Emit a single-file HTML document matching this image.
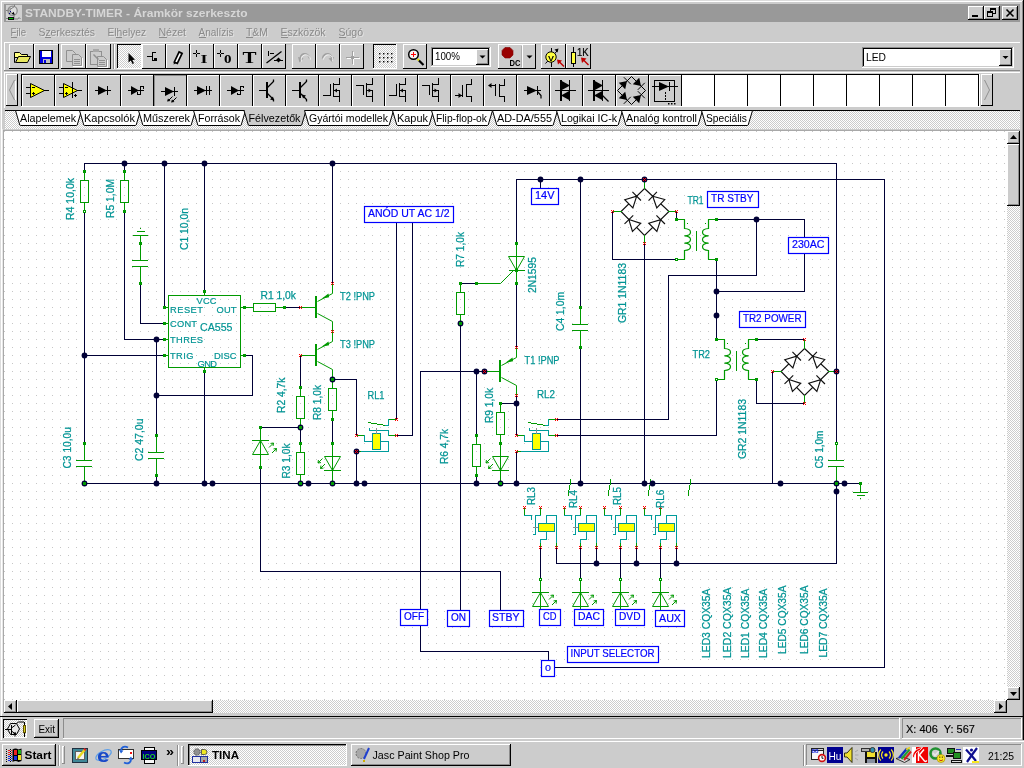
<!DOCTYPE html>
<html lang="hu">
<head>
<meta charset="utf-8">
<title>STANDBY-TIMER - Áramkör szerkeszto</title>
<style>
html,body{margin:0;padding:0;background:#cccccc;overflow:hidden}
body{width:1024px;height:768px;font-family:"Liberation Sans",sans-serif}
svg{display:block;position:absolute;left:0;top:0;will-change:transform}
svg text{font-family:"Liberation Sans",sans-serif;white-space:pre}
</style>
</head>
<body>
<svg width="1024" height="768" viewBox="0 0 1024 768">
<defs>
<pattern id="dith" width="2" height="2" patternUnits="userSpaceOnUse"><rect width="2" height="2" fill="#ffffff"/><rect width="1" height="1" fill="#cccccc"/><rect x="1" y="1" width="1" height="1" fill="#cccccc"/></pattern>
<pattern id="grid" x="4" y="3" width="8" height="8" patternUnits="userSpaceOnUse"><rect x="0" y="0" width="1" height="1" fill="#c6c6c6"/></pattern>
</defs>
<g id="window-frame">
<rect x="0" y="0" width="1024" height="768" fill="#cccccc"/>
<rect x="0" y="0" width="1024" height="1" fill="#dcdcdc"/>
<rect x="0" y="0" width="1" height="741" fill="#dcdcdc"/>
<rect x="1" y="1" width="1022" height="1" fill="#ffffff"/>
<rect x="1" y="1" width="1" height="740" fill="#ffffff"/>
<rect x="1023" y="0" width="1" height="741" fill="#000000"/>
<rect x="1022" y="1" width="1" height="740" fill="#8c8c8c"/>
</g>
<g id="titlebar">
<rect x="4" y="4" width="1016" height="18" fill="#999999"/>
<rect x="6" y="5" width="16" height="16" fill="#d0d0d0"/>
<circle cx="12.6" cy="10.8" r="4.6" fill="#dcdcdc" stroke="#8c8c8c" stroke-width="1.3"/>
<path d="M6 10.5h3.5M10 7.5v6.5M10 9.5l4.5 -3v-2M10 12l4 2.5v4.5h4l1 -1.5l1.5 1.5" stroke="#808080" fill="none"/>
<path d="M8.8 8a4.6 4.6 0 0 0 0 5.6z" fill="#909090"/>
<path d="M14.8 14.8l-3.2 -.8l2 -2.2z" fill="#000"/>
<rect x="10" y="11" width="1" height="1" fill="#000080"/>
<rect x="9" y="13" width="1" height="1" fill="#000080"/>
<rect x="8.5" y="17.5" width="5" height="2" fill="#00c000" stroke="#101010" stroke-width="1"/>
<rect x="6" y="18" width="2" height="1" fill="#808080"/>
<text x="25" y="17" font-size="11.5" fill="#d6d6d6" font-weight="bold" textLength="222.5" lengthAdjust="spacingAndGlyphs">STANDBY-TIMER - Áramkör szerkeszto</text>
<rect x="968" y="6" width="16" height="14" fill="#cccccc"/>
<rect x="968" y="6" width="16" height="1" fill="#ffffff"/>
<rect x="968" y="6" width="1" height="14" fill="#ffffff"/>
<rect x="968" y="19" width="16" height="1" fill="#000000"/>
<rect x="983" y="6" width="1" height="14" fill="#000000"/>
<rect x="969" y="18" width="14" height="1" fill="#8c8c8c"/>
<rect x="982" y="7" width="1" height="12" fill="#8c8c8c"/>
<rect x="972" y="15" width="6" height="2" fill="#000000"/>
<rect x="984" y="6" width="16" height="14" fill="#cccccc"/>
<rect x="984" y="6" width="16" height="1" fill="#ffffff"/>
<rect x="984" y="6" width="1" height="14" fill="#ffffff"/>
<rect x="984" y="19" width="16" height="1" fill="#000000"/>
<rect x="999" y="6" width="1" height="14" fill="#000000"/>
<rect x="985" y="18" width="14" height="1" fill="#8c8c8c"/>
<rect x="998" y="7" width="1" height="12" fill="#8c8c8c"/>
<rect x="990.5" y="8.5" width="5" height="5" fill="none" stroke="#000000" stroke-width="1"/>
<rect x="990" y="8" width="6" height="2" fill="#000000"/>
<rect x="987.5" y="11.5" width="5" height="5" fill="#cccccc" stroke="#000000" stroke-width="1"/>
<rect x="987" y="11" width="6" height="2" fill="#000000"/>
<rect x="1002" y="6" width="16" height="14" fill="#cccccc"/>
<rect x="1002" y="6" width="16" height="1" fill="#ffffff"/>
<rect x="1002" y="6" width="1" height="14" fill="#ffffff"/>
<rect x="1002" y="19" width="16" height="1" fill="#000000"/>
<rect x="1017" y="6" width="1" height="14" fill="#000000"/>
<rect x="1003" y="18" width="14" height="1" fill="#8c8c8c"/>
<rect x="1016" y="7" width="1" height="12" fill="#8c8c8c"/>
<path d="M1006.5 9.5l7 7m0 -7l-7 7" stroke="#000" stroke-width="1.6" fill="none"/>
</g>
<g id="menubar">
<text x="11.5" y="36.5" font-size="11.5" fill="#e4e4e4" textLength="15.5" lengthAdjust="spacingAndGlyphs">File</text>
<text x="10.5" y="35.5" font-size="11.5" fill="#8a8a8a" textLength="15.5" lengthAdjust="spacingAndGlyphs">File</text>
<rect x="11" y="37" width="6" height="1" fill="#8a8a8a"/>
<text x="39.5" y="36.5" font-size="11.5" fill="#e4e4e4" textLength="56.5" lengthAdjust="spacingAndGlyphs">Szerkesztés</text>
<text x="38.5" y="35.5" font-size="11.5" fill="#8a8a8a" textLength="56.5" lengthAdjust="spacingAndGlyphs">Szerkesztés</text>
<rect x="45" y="37" width="6" height="1" fill="#8a8a8a"/>
<text x="108.5" y="36.5" font-size="11.5" fill="#e4e4e4" textLength="38.5" lengthAdjust="spacingAndGlyphs">Elhelyez</text>
<text x="107.5" y="35.5" font-size="11.5" fill="#8a8a8a" textLength="38.5" lengthAdjust="spacingAndGlyphs">Elhelyez</text>
<rect x="116" y="37" width="6" height="1" fill="#8a8a8a"/>
<text x="159.5" y="36.5" font-size="11.5" fill="#e4e4e4" textLength="27.5" lengthAdjust="spacingAndGlyphs">Nézet</text>
<text x="158.5" y="35.5" font-size="11.5" fill="#8a8a8a" textLength="27.5" lengthAdjust="spacingAndGlyphs">Nézet</text>
<rect x="159" y="37" width="8" height="1" fill="#8a8a8a"/>
<text x="199.5" y="36.5" font-size="11.5" fill="#e4e4e4" textLength="35" lengthAdjust="spacingAndGlyphs">Analízis</text>
<text x="198.5" y="35.5" font-size="11.5" fill="#8a8a8a" textLength="35" lengthAdjust="spacingAndGlyphs">Analízis</text>
<rect x="199" y="37" width="7" height="1" fill="#8a8a8a"/>
<text x="247" y="36.5" font-size="11.5" fill="#e4e4e4" textLength="22" lengthAdjust="spacingAndGlyphs">T&amp;M</text>
<text x="246" y="35.5" font-size="11.5" fill="#8a8a8a" textLength="22" lengthAdjust="spacingAndGlyphs">T&amp;M</text>
<rect x="246" y="37" width="7" height="1" fill="#8a8a8a"/>
<text x="281.5" y="36.5" font-size="11.5" fill="#e4e4e4" textLength="45" lengthAdjust="spacingAndGlyphs">Eszközök</text>
<text x="280.5" y="35.5" font-size="11.5" fill="#8a8a8a" textLength="45" lengthAdjust="spacingAndGlyphs">Eszközök</text>
<rect x="281" y="37" width="7" height="1" fill="#8a8a8a"/>
<text x="339.5" y="36.5" font-size="11.5" fill="#e4e4e4" textLength="24.5" lengthAdjust="spacingAndGlyphs">Súgó</text>
<text x="338.5" y="35.5" font-size="11.5" fill="#8a8a8a" textLength="24.5" lengthAdjust="spacingAndGlyphs">Súgó</text>
<rect x="339" y="37" width="7" height="1" fill="#8a8a8a"/>
</g>
<g id="toolbar">
<rect x="4" y="42" width="1016" height="1" fill="#ffffff"/>
<rect x="4" y="42" width="1" height="29" fill="#ffffff"/>
<rect x="4" y="70" width="1016" height="1" fill="#8c8c8c"/>
<rect x="9" y="44" width="25" height="25" fill="#cccccc"/>
<rect x="9" y="44" width="25" height="1" fill="#ffffff"/>
<rect x="9" y="44" width="1" height="25" fill="#ffffff"/>
<rect x="9" y="68" width="25" height="1" fill="#000000"/>
<rect x="33" y="44" width="1" height="25" fill="#000000"/>
<rect x="34" y="44" width="25" height="25" fill="#cccccc"/>
<rect x="34" y="44" width="25" height="1" fill="#ffffff"/>
<rect x="34" y="44" width="1" height="25" fill="#ffffff"/>
<rect x="34" y="68" width="25" height="1" fill="#000000"/>
<rect x="58" y="44" width="1" height="25" fill="#000000"/>
<rect x="61" y="44" width="25" height="25" fill="#cccccc"/>
<rect x="61" y="44" width="25" height="1" fill="#ffffff"/>
<rect x="61" y="44" width="1" height="25" fill="#ffffff"/>
<rect x="61" y="68" width="25" height="1" fill="#000000"/>
<rect x="85" y="44" width="1" height="25" fill="#000000"/>
<rect x="86" y="44" width="25" height="25" fill="#cccccc"/>
<rect x="86" y="44" width="25" height="1" fill="#ffffff"/>
<rect x="86" y="44" width="1" height="25" fill="#ffffff"/>
<rect x="86" y="68" width="25" height="1" fill="#000000"/>
<rect x="110" y="44" width="1" height="25" fill="#000000"/>
<rect x="117" y="44" width="25" height="25" fill="url(#dith)"/>
<rect x="117" y="44" width="25" height="1" fill="#000000"/>
<rect x="117" y="44" width="1" height="25" fill="#000000"/>
<rect x="117" y="68" width="25" height="1" fill="#ffffff"/>
<rect x="141" y="44" width="1" height="25" fill="#ffffff"/>
<rect x="142" y="44" width="24" height="25" fill="#cccccc"/>
<rect x="142" y="44" width="24" height="1" fill="#ffffff"/>
<rect x="142" y="44" width="1" height="25" fill="#ffffff"/>
<rect x="142" y="68" width="24" height="1" fill="#000000"/>
<rect x="165" y="44" width="1" height="25" fill="#000000"/>
<rect x="166" y="44" width="24" height="25" fill="#cccccc"/>
<rect x="166" y="44" width="24" height="1" fill="#ffffff"/>
<rect x="166" y="44" width="1" height="25" fill="#ffffff"/>
<rect x="166" y="68" width="24" height="1" fill="#000000"/>
<rect x="189" y="44" width="1" height="25" fill="#000000"/>
<rect x="190" y="44" width="24" height="25" fill="#cccccc"/>
<rect x="190" y="44" width="24" height="1" fill="#ffffff"/>
<rect x="190" y="44" width="1" height="25" fill="#ffffff"/>
<rect x="190" y="68" width="24" height="1" fill="#000000"/>
<rect x="213" y="44" width="1" height="25" fill="#000000"/>
<rect x="214" y="44" width="24" height="25" fill="#cccccc"/>
<rect x="214" y="44" width="24" height="1" fill="#ffffff"/>
<rect x="214" y="44" width="1" height="25" fill="#ffffff"/>
<rect x="214" y="68" width="24" height="1" fill="#000000"/>
<rect x="237" y="44" width="1" height="25" fill="#000000"/>
<rect x="238" y="44" width="24" height="25" fill="#cccccc"/>
<rect x="238" y="44" width="24" height="1" fill="#ffffff"/>
<rect x="238" y="44" width="1" height="25" fill="#ffffff"/>
<rect x="238" y="68" width="24" height="1" fill="#000000"/>
<rect x="261" y="44" width="1" height="25" fill="#000000"/>
<rect x="262" y="44" width="24" height="25" fill="#cccccc"/>
<rect x="262" y="44" width="24" height="1" fill="#ffffff"/>
<rect x="262" y="44" width="1" height="25" fill="#ffffff"/>
<rect x="262" y="68" width="24" height="1" fill="#000000"/>
<rect x="285" y="44" width="1" height="25" fill="#000000"/>
<rect x="292" y="44" width="24" height="25" fill="#cccccc"/>
<rect x="292" y="44" width="24" height="1" fill="#ffffff"/>
<rect x="292" y="44" width="1" height="25" fill="#ffffff"/>
<rect x="292" y="68" width="24" height="1" fill="#000000"/>
<rect x="315" y="44" width="1" height="25" fill="#000000"/>
<rect x="316" y="44" width="24" height="25" fill="#cccccc"/>
<rect x="316" y="44" width="24" height="1" fill="#ffffff"/>
<rect x="316" y="44" width="1" height="25" fill="#ffffff"/>
<rect x="316" y="68" width="24" height="1" fill="#000000"/>
<rect x="339" y="44" width="1" height="25" fill="#000000"/>
<rect x="340" y="44" width="24" height="25" fill="#cccccc"/>
<rect x="340" y="44" width="24" height="1" fill="#ffffff"/>
<rect x="340" y="44" width="1" height="25" fill="#ffffff"/>
<rect x="340" y="68" width="24" height="1" fill="#000000"/>
<rect x="363" y="44" width="1" height="25" fill="#000000"/>
<rect x="373" y="44" width="24" height="25" fill="url(#dith)"/>
<rect x="373" y="44" width="24" height="1" fill="#000000"/>
<rect x="373" y="44" width="1" height="25" fill="#000000"/>
<rect x="373" y="68" width="24" height="1" fill="#ffffff"/>
<rect x="396" y="44" width="1" height="25" fill="#ffffff"/>
<rect x="403" y="44" width="24" height="25" fill="#cccccc"/>
<rect x="403" y="44" width="24" height="1" fill="#ffffff"/>
<rect x="403" y="44" width="1" height="25" fill="#ffffff"/>
<rect x="403" y="68" width="24" height="1" fill="#000000"/>
<rect x="426" y="44" width="1" height="25" fill="#000000"/>
<rect x="113" y="44" width="1" height="25" fill="#8c8c8c"/>
<rect x="114" y="44" width="1" height="25" fill="#ffffff"/>
<rect x="431" y="47" width="60" height="20" fill="#ffffff"/>
<rect x="431" y="47" width="60" height="1" fill="#8c8c8c"/>
<rect x="431" y="47" width="1" height="20" fill="#8c8c8c"/>
<rect x="431" y="66" width="60" height="1" fill="#ffffff"/>
<rect x="490" y="47" width="1" height="20" fill="#ffffff"/>
<rect x="432" y="48" width="58" height="1" fill="#000000"/>
<rect x="432" y="48" width="1" height="18" fill="#000000"/>
<rect x="432" y="65" width="58" height="1" fill="#cccccc"/>
<rect x="489" y="48" width="1" height="18" fill="#cccccc"/>
<text x="435" y="60" font-size="11.5" fill="#000000" textLength="25" lengthAdjust="spacingAndGlyphs">100%</text>
<rect x="476" y="49" width="13" height="16" fill="#cccccc"/>
<rect x="476" y="49" width="13" height="1" fill="#ffffff"/>
<rect x="476" y="49" width="1" height="16" fill="#ffffff"/>
<rect x="476" y="64" width="13" height="1" fill="#000000"/>
<rect x="488" y="49" width="1" height="16" fill="#000000"/>
<rect x="477" y="63" width="11" height="1" fill="#8c8c8c"/>
<rect x="487" y="50" width="1" height="14" fill="#8c8c8c"/>
<path d="M479.5 55.5h6l-3 3z" fill="#000"/>
<rect x="498" y="44" width="38" height="25" fill="#cccccc"/>
<rect x="498" y="44" width="38" height="1" fill="#ffffff"/>
<rect x="498" y="44" width="1" height="25" fill="#ffffff"/>
<rect x="498" y="68" width="38" height="1" fill="#000000"/>
<rect x="535" y="44" width="1" height="25" fill="#000000"/>
<rect x="521" y="46" width="1" height="21" fill="#b0b0b0"/>
<rect x="522" y="45" width="1" height="23" fill="#ffffff"/>
<path d="M526.5 55.5h6l-3 3z" fill="#000"/>
<rect x="541" y="44" width="25" height="25" fill="#cccccc"/>
<rect x="541" y="44" width="25" height="1" fill="#ffffff"/>
<rect x="541" y="44" width="1" height="25" fill="#ffffff"/>
<rect x="541" y="68" width="25" height="1" fill="#000000"/>
<rect x="565" y="44" width="1" height="25" fill="#000000"/>
<rect x="566" y="44" width="25" height="25" fill="#cccccc"/>
<rect x="566" y="44" width="25" height="1" fill="#ffffff"/>
<rect x="566" y="44" width="1" height="25" fill="#ffffff"/>
<rect x="566" y="68" width="25" height="1" fill="#000000"/>
<rect x="590" y="44" width="1" height="25" fill="#000000"/>
<rect x="862" y="47" width="152" height="21" fill="#ffffff"/>
<rect x="862" y="47" width="152" height="1" fill="#8c8c8c"/>
<rect x="862" y="47" width="1" height="21" fill="#8c8c8c"/>
<rect x="862" y="67" width="152" height="1" fill="#ffffff"/>
<rect x="1013" y="47" width="1" height="21" fill="#ffffff"/>
<rect x="863" y="48" width="150" height="1" fill="#000000"/>
<rect x="863" y="48" width="1" height="19" fill="#000000"/>
<rect x="863" y="66" width="150" height="1" fill="#cccccc"/>
<rect x="1012" y="48" width="1" height="19" fill="#cccccc"/>
<text x="866" y="61" font-size="11.5" fill="#000000" textLength="20" lengthAdjust="spacingAndGlyphs">LED</text>
<rect x="999" y="49" width="13" height="17" fill="#cccccc"/>
<rect x="999" y="49" width="13" height="1" fill="#ffffff"/>
<rect x="999" y="49" width="1" height="17" fill="#ffffff"/>
<rect x="999" y="65" width="13" height="1" fill="#000000"/>
<rect x="1011" y="49" width="1" height="17" fill="#000000"/>
<rect x="1000" y="64" width="11" height="1" fill="#8c8c8c"/>
<rect x="1010" y="50" width="1" height="15" fill="#8c8c8c"/>
<path d="M1002.5 56h6l-3 3z" fill="#000"/>
</g>
<g id="component-palette">
<rect x="4" y="72" width="1016" height="1" fill="#ffffff"/>
<rect x="4" y="72" width="1" height="36" fill="#ffffff"/>
<rect x="6" y="74" width="12" height="32" fill="#cccccc"/>
<rect x="6" y="74" width="12" height="1" fill="#ffffff"/>
<rect x="6" y="74" width="1" height="32" fill="#ffffff"/>
<rect x="6" y="105" width="12" height="1" fill="#000000"/>
<rect x="17" y="74" width="1" height="32" fill="#000000"/>
<path d="M14.5 80l-5 10l5 10" fill="none" stroke="#909090"/>
<rect x="15" y="81" width="1" height="19" fill="#ffffff"/>
<rect x="981" y="74" width="12" height="32" fill="#cccccc"/>
<rect x="981" y="74" width="12" height="1" fill="#ffffff"/>
<rect x="981" y="74" width="1" height="32" fill="#ffffff"/>
<rect x="981" y="105" width="12" height="1" fill="#000000"/>
<rect x="992" y="74" width="1" height="32" fill="#000000"/>
<path d="M984.5 80l5 10l-5 10" fill="none" stroke="#909090"/>
<rect x="21" y="74" width="959" height="1" fill="#000000"/>
<rect x="21" y="74" width="1" height="32" fill="#000000"/>
<rect x="21" y="106" width="959" height="1" fill="#ffffff"/>
<rect x="979" y="74" width="1" height="33" fill="#ffffff"/>
<rect x="22" y="75" width="32" height="31" fill="#cccccc"/>
<rect x="22" y="75" width="1" height="31" fill="#ffffff"/>
<rect x="22" y="75" width="32" height="1" fill="#ffffff"/>
<rect x="54" y="75" width="1" height="31" fill="#000000"/>
<rect x="55" y="75" width="32" height="31" fill="#cccccc"/>
<rect x="55" y="75" width="1" height="31" fill="#ffffff"/>
<rect x="55" y="75" width="32" height="1" fill="#ffffff"/>
<rect x="87" y="75" width="1" height="31" fill="#000000"/>
<rect x="88" y="75" width="32" height="31" fill="#cccccc"/>
<rect x="88" y="75" width="1" height="31" fill="#ffffff"/>
<rect x="88" y="75" width="32" height="1" fill="#ffffff"/>
<rect x="120" y="75" width="1" height="31" fill="#000000"/>
<rect x="121" y="75" width="32" height="31" fill="#cccccc"/>
<rect x="121" y="75" width="1" height="31" fill="#ffffff"/>
<rect x="121" y="75" width="32" height="1" fill="#ffffff"/>
<rect x="153" y="75" width="1" height="31" fill="#000000"/>
<rect x="154" y="75" width="32" height="31" fill="#cccccc"/>
<rect x="154" y="75" width="1" height="31" fill="#8c8c8c"/>
<rect x="154" y="75" width="32" height="1" fill="#8c8c8c"/>
<rect x="186" y="75" width="1" height="31" fill="#000000"/>
<rect x="187" y="75" width="32" height="31" fill="#cccccc"/>
<rect x="187" y="75" width="1" height="31" fill="#ffffff"/>
<rect x="187" y="75" width="32" height="1" fill="#ffffff"/>
<rect x="219" y="75" width="1" height="31" fill="#000000"/>
<rect x="220" y="75" width="32" height="31" fill="#cccccc"/>
<rect x="220" y="75" width="1" height="31" fill="#ffffff"/>
<rect x="220" y="75" width="32" height="1" fill="#ffffff"/>
<rect x="252" y="75" width="1" height="31" fill="#000000"/>
<rect x="253" y="75" width="32" height="31" fill="#cccccc"/>
<rect x="253" y="75" width="1" height="31" fill="#ffffff"/>
<rect x="253" y="75" width="32" height="1" fill="#ffffff"/>
<rect x="285" y="75" width="1" height="31" fill="#000000"/>
<rect x="286" y="75" width="32" height="31" fill="#cccccc"/>
<rect x="286" y="75" width="1" height="31" fill="#ffffff"/>
<rect x="286" y="75" width="32" height="1" fill="#ffffff"/>
<rect x="318" y="75" width="1" height="31" fill="#000000"/>
<rect x="319" y="75" width="32" height="31" fill="#cccccc"/>
<rect x="319" y="75" width="1" height="31" fill="#ffffff"/>
<rect x="319" y="75" width="32" height="1" fill="#ffffff"/>
<rect x="351" y="75" width="1" height="31" fill="#000000"/>
<rect x="352" y="75" width="32" height="31" fill="#cccccc"/>
<rect x="352" y="75" width="1" height="31" fill="#ffffff"/>
<rect x="352" y="75" width="32" height="1" fill="#ffffff"/>
<rect x="384" y="75" width="1" height="31" fill="#000000"/>
<rect x="385" y="75" width="32" height="31" fill="#cccccc"/>
<rect x="385" y="75" width="1" height="31" fill="#ffffff"/>
<rect x="385" y="75" width="32" height="1" fill="#ffffff"/>
<rect x="417" y="75" width="1" height="31" fill="#000000"/>
<rect x="418" y="75" width="32" height="31" fill="#cccccc"/>
<rect x="418" y="75" width="1" height="31" fill="#ffffff"/>
<rect x="418" y="75" width="32" height="1" fill="#ffffff"/>
<rect x="450" y="75" width="1" height="31" fill="#000000"/>
<rect x="451" y="75" width="32" height="31" fill="#cccccc"/>
<rect x="451" y="75" width="1" height="31" fill="#ffffff"/>
<rect x="451" y="75" width="32" height="1" fill="#ffffff"/>
<rect x="483" y="75" width="1" height="31" fill="#000000"/>
<rect x="484" y="75" width="32" height="31" fill="#cccccc"/>
<rect x="484" y="75" width="1" height="31" fill="#ffffff"/>
<rect x="484" y="75" width="32" height="1" fill="#ffffff"/>
<rect x="516" y="75" width="1" height="31" fill="#000000"/>
<rect x="517" y="75" width="32" height="31" fill="#cccccc"/>
<rect x="517" y="75" width="1" height="31" fill="#ffffff"/>
<rect x="517" y="75" width="32" height="1" fill="#ffffff"/>
<rect x="549" y="75" width="1" height="31" fill="#000000"/>
<rect x="550" y="75" width="32" height="31" fill="#cccccc"/>
<rect x="550" y="75" width="1" height="31" fill="#ffffff"/>
<rect x="550" y="75" width="32" height="1" fill="#ffffff"/>
<rect x="582" y="75" width="1" height="31" fill="#000000"/>
<rect x="583" y="75" width="32" height="31" fill="#cccccc"/>
<rect x="583" y="75" width="1" height="31" fill="#ffffff"/>
<rect x="583" y="75" width="32" height="1" fill="#ffffff"/>
<rect x="615" y="75" width="1" height="31" fill="#000000"/>
<rect x="616" y="75" width="32" height="31" fill="#cccccc"/>
<rect x="616" y="75" width="1" height="31" fill="#ffffff"/>
<rect x="616" y="75" width="32" height="1" fill="#ffffff"/>
<rect x="648" y="75" width="1" height="31" fill="#000000"/>
<rect x="649" y="75" width="32" height="31" fill="#cccccc"/>
<rect x="649" y="75" width="1" height="31" fill="#ffffff"/>
<rect x="649" y="75" width="32" height="1" fill="#ffffff"/>
<rect x="681" y="75" width="1" height="31" fill="#000000"/>
<rect x="682" y="75" width="32" height="31" fill="#ffffff"/>
<rect x="714" y="75" width="1" height="31" fill="#000000"/>
<rect x="715" y="75" width="32" height="31" fill="#ffffff"/>
<rect x="747" y="75" width="1" height="31" fill="#000000"/>
<rect x="748" y="75" width="32" height="31" fill="#ffffff"/>
<rect x="780" y="75" width="1" height="31" fill="#000000"/>
<rect x="781" y="75" width="32" height="31" fill="#ffffff"/>
<rect x="813" y="75" width="1" height="31" fill="#000000"/>
<rect x="814" y="75" width="32" height="31" fill="#ffffff"/>
<rect x="846" y="75" width="1" height="31" fill="#000000"/>
<rect x="847" y="75" width="32" height="31" fill="#ffffff"/>
<rect x="879" y="75" width="1" height="31" fill="#000000"/>
<rect x="880" y="75" width="32" height="31" fill="#ffffff"/>
<rect x="912" y="75" width="1" height="31" fill="#000000"/>
<rect x="913" y="75" width="32" height="31" fill="#ffffff"/>
<rect x="945" y="75" width="1" height="31" fill="#000000"/>
<rect x="946" y="75" width="32" height="31" fill="#ffffff"/>
<rect x="978" y="75" width="1" height="31" fill="#000000"/>
</g>
<g id="tabs">
<rect x="5" y="111" width="1015" height="18" fill="url(#dith)"/>
<rect x="5" y="110" width="1015" height="1" fill="#000000"/>
<rect x="4" y="129" width="1016" height="1" fill="#cccccc"/>
<path d="M15.5 110.5L19.8 125L20.5 125.5L76.5 125.5L77.2 125L81.5 110.5Z" fill="#ffffff" stroke="#000000" stroke-width="1"/>
<text x="20" y="122" font-size="11.5" fill="#000000" textLength="56" lengthAdjust="spacingAndGlyphs">Alapelemek</text>
<path d="M79.5 110.5L83.8 125L84.5 125.5L135.5 125.5L136.2 125L140.5 110.5Z" fill="#ffffff" stroke="#000000" stroke-width="1"/>
<text x="84" y="122" font-size="11.5" fill="#000000" textLength="51" lengthAdjust="spacingAndGlyphs">Kapcsolók</text>
<path d="M138.5 110.5L142.8 125L143.5 125.5L190.5 125.5L191.2 125L195.5 110.5Z" fill="#ffffff" stroke="#000000" stroke-width="1"/>
<text x="143" y="122" font-size="11.5" fill="#000000" textLength="47" lengthAdjust="spacingAndGlyphs">Műszerek</text>
<path d="M193.5 110.5L197.8 125L198.5 125.5L240.5 125.5L241.2 125L245.5 110.5Z" fill="#ffffff" stroke="#000000" stroke-width="1"/>
<text x="198" y="122" font-size="11.5" fill="#000000" textLength="42" lengthAdjust="spacingAndGlyphs">Források</text>
<path d="M244 110.5L248.3 125L249 125.5L301 125.5L301.7 125L306 110.5Z" fill="#cccccc" stroke="none" stroke-width="1"/>
<path d="M244 110.5L248.3 125L249 125.5L301 125.5L301.7 125L306 110.5" fill="none" stroke="#000000" stroke-width="1"/>
<rect x="245" y="110" width="60" height="1" fill="#cccccc"/>
<text x="248.5" y="122" font-size="11.5" fill="#000000" textLength="52" lengthAdjust="spacingAndGlyphs">Félvezetők</text>
<path d="M304.5 110.5L308.8 125L309.5 125.5L388.5 125.5L389.2 125L393.5 110.5Z" fill="#ffffff" stroke="#000000" stroke-width="1"/>
<text x="309" y="122" font-size="11.5" fill="#000000" textLength="79" lengthAdjust="spacingAndGlyphs">Gyártói modellek</text>
<path d="M392.5 110.5L396.8 125L397.5 125.5L428.5 125.5L429.2 125L433.5 110.5Z" fill="#ffffff" stroke="#000000" stroke-width="1"/>
<text x="397" y="122" font-size="11.5" fill="#000000" textLength="31" lengthAdjust="spacingAndGlyphs">Kapuk</text>
<path d="M431.5 110.5L435.8 125L436.5 125.5L487.5 125.5L488.2 125L492.5 110.5Z" fill="#ffffff" stroke="#000000" stroke-width="1"/>
<text x="436" y="122" font-size="11.5" fill="#000000" textLength="51" lengthAdjust="spacingAndGlyphs">Flip-flop-ok</text>
<path d="M492.5 110.5L496.8 125L497.5 125.5L552.5 125.5L553.2 125L557.5 110.5Z" fill="#ffffff" stroke="#000000" stroke-width="1"/>
<text x="497" y="122" font-size="11.5" fill="#000000" textLength="55" lengthAdjust="spacingAndGlyphs">AD-DA/555</text>
<path d="M556.5 110.5L560.8 125L561.5 125.5L617.5 125.5L618.2 125L622.5 110.5Z" fill="#ffffff" stroke="#000000" stroke-width="1"/>
<text x="561" y="122" font-size="11.5" fill="#000000" textLength="56" lengthAdjust="spacingAndGlyphs">Logikai IC-k</text>
<path d="M621.5 110.5L625.8 125L626.5 125.5L697.5 125.5L698.2 125L702.5 110.5Z" fill="#ffffff" stroke="#000000" stroke-width="1"/>
<text x="626" y="122" font-size="11.5" fill="#000000" textLength="71" lengthAdjust="spacingAndGlyphs">Analóg kontroll</text>
<path d="M701.5 110.5L705.8 125L706.5 125.5L747.5 125.5L748.2 125L752.5 110.5Z" fill="#ffffff" stroke="#000000" stroke-width="1"/>
<text x="706" y="122" font-size="11.5" fill="#000000" textLength="41" lengthAdjust="spacingAndGlyphs">Speciális</text>
</g>
<g id="canvas">
<rect x="2" y="129" width="1" height="585" fill="#e8e8e8"/>
<rect x="3" y="130" width="1" height="583" fill="#a8a8a8"/>
<rect x="3" y="130" width="1017" height="1" fill="#a8a8a8"/>
<rect x="4" y="131" width="1003" height="569" fill="#ffffff"/>
<rect x="4" y="131" width="1003" height="569" fill="url(#grid)"/>
<rect x="1007" y="131" width="13" height="569" fill="url(#dith)"/>
<rect x="1007" y="131" width="13" height="13" fill="#cccccc"/>
<rect x="1007" y="131" width="13" height="1" fill="#ffffff"/>
<rect x="1007" y="131" width="1" height="13" fill="#ffffff"/>
<rect x="1007" y="143" width="13" height="1" fill="#000000"/>
<rect x="1019" y="131" width="1" height="13" fill="#000000"/>
<rect x="1008" y="142" width="11" height="1" fill="#8c8c8c"/>
<rect x="1018" y="132" width="1" height="11" fill="#8c8c8c"/>
<path d="M1010 139h7l-3.5 -4z" fill="#000"/>
<rect x="1007" y="144" width="13" height="62" fill="#cccccc"/>
<rect x="1007" y="144" width="13" height="1" fill="#ffffff"/>
<rect x="1007" y="144" width="1" height="62" fill="#ffffff"/>
<rect x="1007" y="205" width="13" height="1" fill="#000000"/>
<rect x="1019" y="144" width="1" height="62" fill="#000000"/>
<rect x="1008" y="204" width="11" height="1" fill="#8c8c8c"/>
<rect x="1018" y="145" width="1" height="60" fill="#8c8c8c"/>
<rect x="1007" y="687" width="13" height="13" fill="#cccccc"/>
<rect x="1007" y="687" width="13" height="1" fill="#ffffff"/>
<rect x="1007" y="687" width="1" height="13" fill="#ffffff"/>
<rect x="1007" y="699" width="13" height="1" fill="#000000"/>
<rect x="1019" y="687" width="1" height="13" fill="#000000"/>
<rect x="1008" y="698" width="11" height="1" fill="#8c8c8c"/>
<rect x="1018" y="688" width="1" height="11" fill="#8c8c8c"/>
<path d="M1010 692h7l-3.5 4z" fill="#000"/>
<rect x="4" y="700" width="1003" height="13" fill="url(#dith)"/>
<rect x="4" y="700" width="13" height="13" fill="#cccccc"/>
<rect x="4" y="700" width="13" height="1" fill="#ffffff"/>
<rect x="4" y="700" width="1" height="13" fill="#ffffff"/>
<rect x="4" y="712" width="13" height="1" fill="#000000"/>
<rect x="16" y="700" width="1" height="13" fill="#000000"/>
<rect x="5" y="711" width="11" height="1" fill="#8c8c8c"/>
<rect x="15" y="701" width="1" height="11" fill="#8c8c8c"/>
<path d="M12 703v7l-4 -3.5z" fill="#000"/>
<rect x="17" y="700" width="196" height="13" fill="#cccccc"/>
<rect x="17" y="700" width="196" height="1" fill="#ffffff"/>
<rect x="17" y="700" width="1" height="13" fill="#ffffff"/>
<rect x="17" y="712" width="196" height="1" fill="#000000"/>
<rect x="212" y="700" width="1" height="13" fill="#000000"/>
<rect x="18" y="711" width="194" height="1" fill="#8c8c8c"/>
<rect x="211" y="701" width="1" height="11" fill="#8c8c8c"/>
<rect x="994" y="700" width="13" height="13" fill="#cccccc"/>
<rect x="994" y="700" width="13" height="1" fill="#ffffff"/>
<rect x="994" y="700" width="1" height="13" fill="#ffffff"/>
<rect x="994" y="712" width="13" height="1" fill="#000000"/>
<rect x="1006" y="700" width="1" height="13" fill="#000000"/>
<rect x="995" y="711" width="11" height="1" fill="#8c8c8c"/>
<rect x="1005" y="701" width="1" height="11" fill="#8c8c8c"/>
<path d="M999 703v7l4 -3.5z" fill="#000"/>
<rect x="1007" y="700" width="13" height="13" fill="#cccccc"/>
<rect x="0" y="716" width="1024" height="1" fill="#000000"/>
</g>
<g id="schematic">
<polyline points="84.5,171.5 84.5,163.5 836.5,163.5 836.5,443.5" fill="none" stroke="#000036" stroke-width="1" shape-rendering="crispEdges" stroke-linecap="square"/>
<polyline points="84.5,211.5 84.5,443.5" fill="none" stroke="#000036" stroke-width="1" shape-rendering="crispEdges" stroke-linecap="square"/>
<polyline points="124.5,163.5 124.5,171.5" fill="none" stroke="#000036" stroke-width="1" shape-rendering="crispEdges" stroke-linecap="square"/>
<polyline points="124.5,211.5 124.5,339.5 164.5,339.5" fill="none" stroke="#000036" stroke-width="1" shape-rendering="crispEdges" stroke-linecap="square"/>
<polyline points="164.5,163.5 164.5,307.5" fill="none" stroke="#000036" stroke-width="1" shape-rendering="crispEdges" stroke-linecap="square"/>
<polyline points="204.5,163.5 204.5,291.5" fill="none" stroke="#000036" stroke-width="1" shape-rendering="crispEdges" stroke-linecap="square"/>
<polyline points="140.5,283.5 140.5,323.5 164.5,323.5" fill="none" stroke="#000036" stroke-width="1" shape-rendering="crispEdges" stroke-linecap="square"/>
<polyline points="84.5,355.5 164.5,355.5" fill="none" stroke="#000036" stroke-width="1" shape-rendering="crispEdges" stroke-linecap="square"/>
<polyline points="156.5,339.5 156.5,435.5" fill="none" stroke="#000036" stroke-width="1" shape-rendering="crispEdges" stroke-linecap="square"/>
<polyline points="244.5,355.5 252.5,355.5 252.5,395.5 156.5,395.5" fill="none" stroke="#000036" stroke-width="1" shape-rendering="crispEdges" stroke-linecap="square"/>
<polyline points="204.5,371.5 204.5,483.5" fill="none" stroke="#000036" stroke-width="1" shape-rendering="crispEdges" stroke-linecap="square"/>
<polyline points="84.5,483.5 860.5,483.5" fill="none" stroke="#000036" stroke-width="1" shape-rendering="crispEdges" stroke-linecap="square"/>
<polyline points="156.5,475.5 156.5,483.5" fill="none" stroke="#000036" stroke-width="1" shape-rendering="crispEdges" stroke-linecap="square"/>
<polyline points="332.5,163.5 332.5,283.5" fill="none" stroke="#000036" stroke-width="1" shape-rendering="crispEdges" stroke-linecap="square"/>
<polyline points="284.5,307.5 300.5,307.5" fill="none" stroke="#000036" stroke-width="1" shape-rendering="crispEdges" stroke-linecap="square"/>
<polyline points="300.5,355.5 300.5,387.5" fill="none" stroke="#000036" stroke-width="1" shape-rendering="crispEdges" stroke-linecap="square"/>
<polyline points="300.5,427.5 300.5,443.5" fill="none" stroke="#000036" stroke-width="1" shape-rendering="crispEdges" stroke-linecap="square"/>
<polyline points="300.5,427.5 260.5,427.5" fill="none" stroke="#000036" stroke-width="1" shape-rendering="crispEdges" stroke-linecap="square"/>
<polyline points="260.5,467.5 260.5,571.5 500.5,571.5 500.5,610.5" fill="none" stroke="#000036" stroke-width="1" shape-rendering="crispEdges" stroke-linecap="square"/>
<polyline points="332.5,419.5 332.5,443.5" fill="none" stroke="#000036" stroke-width="1" shape-rendering="crispEdges" stroke-linecap="square"/>
<polyline points="332.5,379.5 356.5,379.5 356.5,435.5" fill="none" stroke="#000036" stroke-width="1" shape-rendering="crispEdges" stroke-linecap="square"/>
<polyline points="356.5,451.5 356.5,483.5" fill="none" stroke="#000036" stroke-width="1" shape-rendering="crispEdges" stroke-linecap="square"/>
<polyline points="396.5,223.5 396.5,419.5" fill="none" stroke="#000036" stroke-width="1" shape-rendering="crispEdges" stroke-linecap="square"/>
<polyline points="412.5,223.5 412.5,435.5 396.5,435.5" fill="none" stroke="#000036" stroke-width="1" shape-rendering="crispEdges" stroke-linecap="square"/>
<polyline points="484.5,371.5 420.5,371.5 420.5,609.5" fill="none" stroke="#000036" stroke-width="1" shape-rendering="crispEdges" stroke-linecap="square"/>
<polyline points="420.5,626.5 420.5,651.5 548.5,651.5 548.5,660.5" fill="none" stroke="#000036" stroke-width="1" shape-rendering="crispEdges" stroke-linecap="square"/>
<polyline points="460.5,283.5 476.5,283.5" fill="none" stroke="#000036" stroke-width="1" shape-rendering="crispEdges" stroke-linecap="square"/>
<polyline points="460.5,323.5 460.5,610.5" fill="none" stroke="#000036" stroke-width="1" shape-rendering="crispEdges" stroke-linecap="square"/>
<polyline points="476.5,371.5 476.5,435.5" fill="none" stroke="#000036" stroke-width="1" shape-rendering="crispEdges" stroke-linecap="square"/>
<polyline points="476.5,475.5 476.5,483.5" fill="none" stroke="#000036" stroke-width="1" shape-rendering="crispEdges" stroke-linecap="square"/>
<polyline points="516.5,243.5 516.5,179.5 884.5,179.5 884.5,667.5 554.5,667.5" fill="none" stroke="#000036" stroke-width="1" shape-rendering="crispEdges" stroke-linecap="square"/>
<polyline points="540.5,179.5 540.5,188.5" fill="none" stroke="#000036" stroke-width="1" shape-rendering="crispEdges" stroke-linecap="square"/>
<polyline points="580.5,179.5 580.5,307.5" fill="none" stroke="#000036" stroke-width="1" shape-rendering="crispEdges" stroke-linecap="square"/>
<polyline points="580.5,347.5 580.5,483.5" fill="none" stroke="#000036" stroke-width="1" shape-rendering="crispEdges" stroke-linecap="square"/>
<polyline points="516.5,283.5 516.5,347.5" fill="none" stroke="#000036" stroke-width="1" shape-rendering="crispEdges" stroke-linecap="square"/>
<polyline points="516.5,395.5 516.5,435.5" fill="none" stroke="#000036" stroke-width="1" shape-rendering="crispEdges" stroke-linecap="square"/>
<polyline points="516.5,403.5 500.5,403.5" fill="none" stroke="#000036" stroke-width="1" shape-rendering="crispEdges" stroke-linecap="square"/>
<polyline points="516.5,451.5 516.5,483.5" fill="none" stroke="#000036" stroke-width="1" shape-rendering="crispEdges" stroke-linecap="square"/>
<polyline points="612.5,211.5 612.5,259.5 676.5,259.5" fill="none" stroke="#000036" stroke-width="1" shape-rendering="crispEdges" stroke-linecap="square"/>
<polyline points="676.5,211.5 676.5,219.5" fill="none" stroke="#000036" stroke-width="1" shape-rendering="crispEdges" stroke-linecap="square"/>
<polyline points="644.5,243.5 644.5,483.5" fill="none" stroke="#000036" stroke-width="1" shape-rendering="crispEdges" stroke-linecap="square"/>
<polyline points="716.5,219.5 804.5,219.5 804.5,237.5" fill="none" stroke="#000036" stroke-width="1" shape-rendering="crispEdges" stroke-linecap="square"/>
<polyline points="804.5,253.5 804.5,291.5 716.5,291.5" fill="none" stroke="#000036" stroke-width="1" shape-rendering="crispEdges" stroke-linecap="square"/>
<polyline points="756.5,219.5 756.5,275.5 668.5,275.5 668.5,419.5 556.5,419.5" fill="none" stroke="#000036" stroke-width="1" shape-rendering="crispEdges" stroke-linecap="square"/>
<polyline points="716.5,259.5 716.5,339.5" fill="none" stroke="#000036" stroke-width="1" shape-rendering="crispEdges" stroke-linecap="square"/>
<polyline points="716.5,379.5 716.5,435.5 556.5,435.5" fill="none" stroke="#000036" stroke-width="1" shape-rendering="crispEdges" stroke-linecap="square"/>
<polyline points="756.5,339.5 804.5,339.5" fill="none" stroke="#000036" stroke-width="1" shape-rendering="crispEdges" stroke-linecap="square"/>
<polyline points="756.5,379.5 756.5,403.5 804.5,403.5" fill="none" stroke="#000036" stroke-width="1" shape-rendering="crispEdges" stroke-linecap="square"/>
<polyline points="772.5,371.5 772.5,483.5" fill="none" stroke="#000036" stroke-width="1" shape-rendering="crispEdges" stroke-linecap="square"/>
<polyline points="540.5,547.5 540.5,579.5" fill="none" stroke="#000036" stroke-width="1" shape-rendering="crispEdges" stroke-linecap="square"/>
<polyline points="556.5,547.5 556.5,563.5" fill="none" stroke="#000036" stroke-width="1" shape-rendering="crispEdges" stroke-linecap="square"/>
<polyline points="580.5,547.5 580.5,579.5" fill="none" stroke="#000036" stroke-width="1" shape-rendering="crispEdges" stroke-linecap="square"/>
<polyline points="596.5,547.5 596.5,563.5" fill="none" stroke="#000036" stroke-width="1" shape-rendering="crispEdges" stroke-linecap="square"/>
<polyline points="620.5,547.5 620.5,579.5" fill="none" stroke="#000036" stroke-width="1" shape-rendering="crispEdges" stroke-linecap="square"/>
<polyline points="636.5,547.5 636.5,563.5" fill="none" stroke="#000036" stroke-width="1" shape-rendering="crispEdges" stroke-linecap="square"/>
<polyline points="660.5,547.5 660.5,579.5" fill="none" stroke="#000036" stroke-width="1" shape-rendering="crispEdges" stroke-linecap="square"/>
<polyline points="676.5,547.5 676.5,563.5" fill="none" stroke="#000036" stroke-width="1" shape-rendering="crispEdges" stroke-linecap="square"/>
<polyline points="556.5,563.5 836.5,563.5 836.5,483.5" fill="none" stroke="#000036" stroke-width="1" shape-rendering="crispEdges" stroke-linecap="square"/>
<polyline points="84.5,171.5 84.5,180.5" fill="none" stroke="#009900" stroke-width="1" shape-rendering="crispEdges" stroke-linecap="square"/>
<polyline points="84.5,202.5 84.5,211.5" fill="none" stroke="#009900" stroke-width="1" shape-rendering="crispEdges" stroke-linecap="square"/>
<rect x="80.5" y="180.5" width="8" height="22" fill="none" stroke="#009900" stroke-width="1"/>
<rect x="83" y="170" width="3" height="3" fill="#009900"/>
<rect x="83.5" y="210.5" width="2" height="2" fill="#ffffff" stroke="#009900" stroke-width="1"/>
<polyline points="124.5,171.5 124.5,180.5" fill="none" stroke="#009900" stroke-width="1" shape-rendering="crispEdges" stroke-linecap="square"/>
<polyline points="124.5,202.5 124.5,211.5" fill="none" stroke="#009900" stroke-width="1" shape-rendering="crispEdges" stroke-linecap="square"/>
<rect x="120.5" y="180.5" width="8" height="22" fill="none" stroke="#009900" stroke-width="1"/>
<rect x="123" y="170" width="3" height="3" fill="#009900"/>
<rect x="123" y="210" width="3" height="3" fill="#009900"/>
<polyline points="140.5,243.5 140.5,235.5" fill="none" stroke="#009900" stroke-width="1" shape-rendering="crispEdges" stroke-linecap="square"/>
<polyline points="133.5,235.5 147.5,235.5" fill="none" stroke="#009900" stroke-width="1" shape-rendering="crispEdges" stroke-linecap="square"/>
<polyline points="137.5,231.5 144.5,231.5" fill="none" stroke="#009900" stroke-width="1" shape-rendering="crispEdges" stroke-linecap="square"/>
<rect x="140" y="228" width="1" height="1" fill="#009900"/>
<rect x="139" y="242" width="3" height="3" fill="#009900"/>
<polyline points="140.5,243.5 140.5,260.5" fill="none" stroke="#009900" stroke-width="1" shape-rendering="crispEdges" stroke-linecap="square"/>
<polyline points="140.5,266.5 140.5,283.5" fill="none" stroke="#009900" stroke-width="1" shape-rendering="crispEdges" stroke-linecap="square"/>
<polyline points="132.5,260.5 147.5,260.5" fill="none" stroke="#009900" stroke-width="1" shape-rendering="crispEdges" stroke-linecap="square"/>
<polyline points="132.5,266.5 147.5,266.5" fill="none" stroke="#009900" stroke-width="1" shape-rendering="crispEdges" stroke-linecap="square"/>
<rect x="139" y="242" width="3" height="3" fill="#009900"/>
<rect x="139" y="282" width="3" height="3" fill="#009900"/>
<polyline points="84.5,443.5 84.5,460.5" fill="none" stroke="#009900" stroke-width="1" shape-rendering="crispEdges" stroke-linecap="square"/>
<polyline points="84.5,466.5 84.5,483.5" fill="none" stroke="#009900" stroke-width="1" shape-rendering="crispEdges" stroke-linecap="square"/>
<polyline points="76.5,460.5 91.5,460.5" fill="none" stroke="#009900" stroke-width="1" shape-rendering="crispEdges" stroke-linecap="square"/>
<polyline points="76.5,466.5 91.5,466.5" fill="none" stroke="#009900" stroke-width="1" shape-rendering="crispEdges" stroke-linecap="square"/>
<rect x="83" y="442" width="3" height="3" fill="#009900"/>
<rect x="83" y="482" width="3" height="3" fill="#009900"/>
<polyline points="156.5,435.5 156.5,452.5" fill="none" stroke="#009900" stroke-width="1" shape-rendering="crispEdges" stroke-linecap="square"/>
<polyline points="156.5,458.5 156.5,475.5" fill="none" stroke="#009900" stroke-width="1" shape-rendering="crispEdges" stroke-linecap="square"/>
<polyline points="148.5,452.5 163.5,452.5" fill="none" stroke="#009900" stroke-width="1" shape-rendering="crispEdges" stroke-linecap="square"/>
<polyline points="148.5,458.5 163.5,458.5" fill="none" stroke="#009900" stroke-width="1" shape-rendering="crispEdges" stroke-linecap="square"/>
<rect x="155" y="434" width="3" height="3" fill="#009900"/>
<rect x="155" y="474" width="3" height="3" fill="#009900"/>
<rect x="168.5" y="295.5" width="72" height="72" fill="none" stroke="#009900" stroke-width="1"/>
<polyline points="204.5,291.5 204.5,295.5" fill="none" stroke="#009900" stroke-width="1" shape-rendering="crispEdges" stroke-linecap="square"/>
<rect x="203" y="290" width="3" height="3" fill="#009900"/>
<polyline points="164.5,307.5 168.5,307.5" fill="none" stroke="#009900" stroke-width="1" shape-rendering="crispEdges" stroke-linecap="square"/>
<rect x="163" y="306" width="3" height="3" fill="#009900"/>
<polyline points="164.5,323.5 168.5,323.5" fill="none" stroke="#009900" stroke-width="1" shape-rendering="crispEdges" stroke-linecap="square"/>
<rect x="163" y="322" width="3" height="3" fill="#009900"/>
<polyline points="164.5,339.5 168.5,339.5" fill="none" stroke="#009900" stroke-width="1" shape-rendering="crispEdges" stroke-linecap="square"/>
<rect x="163" y="338" width="3" height="3" fill="#009900"/>
<polyline points="164.5,355.5 168.5,355.5" fill="none" stroke="#009900" stroke-width="1" shape-rendering="crispEdges" stroke-linecap="square"/>
<rect x="163" y="354" width="3" height="3" fill="#009900"/>
<polyline points="204.5,371.5 204.5,367.5" fill="none" stroke="#009900" stroke-width="1" shape-rendering="crispEdges" stroke-linecap="square"/>
<rect x="203" y="370" width="3" height="3" fill="#009900"/>
<polyline points="244.5,307.5 240.5,307.5" fill="none" stroke="#009900" stroke-width="1" shape-rendering="crispEdges" stroke-linecap="square"/>
<rect x="243" y="306" width="3" height="3" fill="#009900"/>
<polyline points="244.5,355.5 240.5,355.5" fill="none" stroke="#009900" stroke-width="1" shape-rendering="crispEdges" stroke-linecap="square"/>
<rect x="243" y="354" width="3" height="3" fill="#009900"/>
<text x="196.5" y="303.5" font-size="9.3" fill="#009494" textLength="20" lengthAdjust="spacing" stroke="#009494" stroke-width=".18">VCC</text>
<text x="170" y="312.5" font-size="9.3" fill="#009494" textLength="33" lengthAdjust="spacing" stroke="#009494" stroke-width=".18">RESET</text>
<text x="216.5" y="312.5" font-size="9.3" fill="#009494" textLength="20" lengthAdjust="spacing" stroke="#009494" stroke-width=".18">OUT</text>
<text x="170" y="326.5" font-size="9.3" fill="#009494" textLength="27" lengthAdjust="spacing" stroke="#009494" stroke-width=".18">CONT</text>
<text x="200" y="330.5" font-size="10.5" fill="#009494" textLength="32.5" lengthAdjust="spacingAndGlyphs" stroke="#009494" stroke-width=".18">CA555</text>
<text x="170" y="342.5" font-size="9.3" fill="#009494" textLength="33" lengthAdjust="spacing" stroke="#009494" stroke-width=".18">THRES</text>
<text x="170" y="358.5" font-size="9.3" fill="#009494" textLength="23.5" lengthAdjust="spacing" stroke="#009494" stroke-width=".18">TRIG</text>
<text x="214" y="358.5" font-size="9.3" fill="#009494" textLength="22.5" lengthAdjust="spacing" stroke="#009494" stroke-width=".18">DISC</text>
<text x="197.5" y="366.5" font-size="9.3" fill="#009494" textLength="19.5" lengthAdjust="spacing" stroke="#009494" stroke-width=".18">GND</text>
<polyline points="244.5,307.5 253.5,307.5" fill="none" stroke="#009900" stroke-width="1" shape-rendering="crispEdges" stroke-linecap="square"/>
<polyline points="275.5,307.5 284.5,307.5" fill="none" stroke="#009900" stroke-width="1" shape-rendering="crispEdges" stroke-linecap="square"/>
<rect x="253.5" y="303.5" width="22" height="8" fill="none" stroke="#009900" stroke-width="1"/>
<rect x="243" y="306" width="3" height="3" fill="#009900"/>
<rect x="283" y="306" width="3" height="3" fill="#009900"/>
<polyline points="300.5,307.5 316.5,307.5" fill="none" stroke="#009900" stroke-width="1" shape-rendering="crispEdges" stroke-linecap="square"/>
<rect x="315" y="296" width="2" height="22" fill="#009900"/>
<polyline points="332.5,283.5 332.5,293.5 317.5,301.5" fill="none" stroke="#009900" stroke-width="1"/>
<polyline points="317.5,313.5 332.5,321.5 332.5,331.5" fill="none" stroke="#009900" stroke-width="1"/>
<polygon points="321.5,298.7 328.5,293.5 329.1,297.3" fill="#009900"/>
<path d="M299 306l3 3m0 -3l-3 3" stroke="#ff0000" stroke-width="1" fill="none"/>
<path d="M331 282l3 3m0 -3l-3 3" stroke="#ff0000" stroke-width="1" fill="none"/>
<path d="M331 330l3 3m0 -3l-3 3" stroke="#ff0000" stroke-width="1" fill="none"/>
<polyline points="300.5,355.5 316.5,355.5" fill="none" stroke="#009900" stroke-width="1" shape-rendering="crispEdges" stroke-linecap="square"/>
<rect x="315" y="344" width="2" height="22" fill="#009900"/>
<polyline points="332.5,331.5 332.5,341.5 317.5,349.5" fill="none" stroke="#009900" stroke-width="1"/>
<polyline points="317.5,361.5 332.5,369.5 332.5,379.5" fill="none" stroke="#009900" stroke-width="1"/>
<polygon points="321.5,346.7 328.5,341.5 329.1,345.3" fill="#009900"/>
<path d="M299 354l3 3m0 -3l-3 3" stroke="#ff0000" stroke-width="1" fill="none"/>
<path d="M331 330l3 3m0 -3l-3 3" stroke="#ff0000" stroke-width="1" fill="none"/>
<path d="M331 378l3 3m0 -3l-3 3" stroke="#ff0000" stroke-width="1" fill="none"/>
<polyline points="484.5,371.5 500.5,371.5" fill="none" stroke="#009900" stroke-width="1" shape-rendering="crispEdges" stroke-linecap="square"/>
<rect x="499" y="360" width="2" height="22" fill="#009900"/>
<polyline points="516.5,347.5 516.5,357.5 501.5,365.5" fill="none" stroke="#009900" stroke-width="1"/>
<polyline points="501.5,377.5 516.5,385.5 516.5,395.5" fill="none" stroke="#009900" stroke-width="1"/>
<polygon points="505.5,362.7 512.5,357.5 513.1,361.3" fill="#009900"/>
<path d="M483 370l3 3m0 -3l-3 3" stroke="#ff0000" stroke-width="1" fill="none"/>
<path d="M515 346l3 3m0 -3l-3 3" stroke="#ff0000" stroke-width="1" fill="none"/>
<path d="M515 394l3 3m0 -3l-3 3" stroke="#ff0000" stroke-width="1" fill="none"/>
<polyline points="300.5,387.5 300.5,396.5" fill="none" stroke="#009900" stroke-width="1" shape-rendering="crispEdges" stroke-linecap="square"/>
<polyline points="300.5,418.5 300.5,427.5" fill="none" stroke="#009900" stroke-width="1" shape-rendering="crispEdges" stroke-linecap="square"/>
<rect x="296.5" y="396.5" width="8" height="22" fill="none" stroke="#009900" stroke-width="1"/>
<rect x="299" y="386" width="3" height="3" fill="#009900"/>
<rect x="299" y="426" width="3" height="3" fill="#009900"/>
<polyline points="300.5,443.5 300.5,452.5" fill="none" stroke="#009900" stroke-width="1" shape-rendering="crispEdges" stroke-linecap="square"/>
<polyline points="300.5,474.5 300.5,483.5" fill="none" stroke="#009900" stroke-width="1" shape-rendering="crispEdges" stroke-linecap="square"/>
<rect x="296.5" y="452.5" width="8" height="22" fill="none" stroke="#009900" stroke-width="1"/>
<rect x="299" y="442" width="3" height="3" fill="#009900"/>
<rect x="299" y="482" width="3" height="3" fill="#009900"/>
<polyline points="332.5,379.5 332.5,388.5" fill="none" stroke="#009900" stroke-width="1" shape-rendering="crispEdges" stroke-linecap="square"/>
<polyline points="332.5,410.5 332.5,419.5" fill="none" stroke="#009900" stroke-width="1" shape-rendering="crispEdges" stroke-linecap="square"/>
<rect x="328.5" y="388.5" width="8" height="22" fill="none" stroke="#009900" stroke-width="1"/>
<rect x="331" y="378" width="3" height="3" fill="#009900"/>
<rect x="331" y="418" width="3" height="3" fill="#009900"/>
<polyline points="460.5,283.5 460.5,292.5" fill="none" stroke="#009900" stroke-width="1" shape-rendering="crispEdges" stroke-linecap="square"/>
<polyline points="460.5,314.5 460.5,323.5" fill="none" stroke="#009900" stroke-width="1" shape-rendering="crispEdges" stroke-linecap="square"/>
<rect x="456.5" y="292.5" width="8" height="22" fill="none" stroke="#009900" stroke-width="1"/>
<rect x="459" y="282" width="3" height="3" fill="#009900"/>
<rect x="459" y="322" width="3" height="3" fill="#009900"/>
<polyline points="476.5,435.5 476.5,444.5" fill="none" stroke="#009900" stroke-width="1" shape-rendering="crispEdges" stroke-linecap="square"/>
<polyline points="476.5,466.5 476.5,475.5" fill="none" stroke="#009900" stroke-width="1" shape-rendering="crispEdges" stroke-linecap="square"/>
<rect x="472.5" y="444.5" width="8" height="22" fill="none" stroke="#009900" stroke-width="1"/>
<rect x="475" y="434" width="3" height="3" fill="#009900"/>
<rect x="475" y="474" width="3" height="3" fill="#009900"/>
<polyline points="500.5,403.5 500.5,412.5" fill="none" stroke="#009900" stroke-width="1" shape-rendering="crispEdges" stroke-linecap="square"/>
<polyline points="500.5,434.5 500.5,443.5" fill="none" stroke="#009900" stroke-width="1" shape-rendering="crispEdges" stroke-linecap="square"/>
<rect x="496.5" y="412.5" width="8" height="22" fill="none" stroke="#009900" stroke-width="1"/>
<rect x="499" y="402" width="3" height="3" fill="#009900"/>
<rect x="499" y="442" width="3" height="3" fill="#009900"/>
<polyline points="260.5,427.5 260.5,467.5" fill="none" stroke="#009900" stroke-width="1" shape-rendering="crispEdges" stroke-linecap="square"/>
<polyline points="252.5,440.5 268.5,440.5" fill="none" stroke="#009900" stroke-width="1" shape-rendering="crispEdges" stroke-linecap="square"/>
<polygon points="260.5,440.5 268.5,454.5 252.5,454.5" fill="none" stroke="#009900" stroke-width="1"/>
<line x1="269" y1="447.5" x2="273.5" y2="443" stroke="#009900"/>
<line x1="273.5" y1="443" x2="273.07" y2="445.97" stroke="#009900"/>
<line x1="273.5" y1="443" x2="270.53" y2="443.43" stroke="#009900"/>
<line x1="272" y1="453" x2="276.5" y2="448.5" stroke="#009900"/>
<line x1="276.5" y1="448.5" x2="276.07" y2="451.47" stroke="#009900"/>
<line x1="276.5" y1="448.5" x2="273.53" y2="448.93" stroke="#009900"/>
<rect x="259" y="426" width="3" height="3" fill="#009900"/>
<rect x="259" y="466" width="3" height="3" fill="#009900"/>
<polyline points="332.5,443.5 332.5,483.5" fill="none" stroke="#009900" stroke-width="1" shape-rendering="crispEdges" stroke-linecap="square"/>
<polyline points="324.5,470.5 340.5,470.5" fill="none" stroke="#009900" stroke-width="1" shape-rendering="crispEdges" stroke-linecap="square"/>
<polygon points="324.5,456.5 340.5,456.5 332.5,470.5" fill="none" stroke="#009900" stroke-width="1"/>
<line x1="322.5" y1="458.5" x2="318" y2="463" stroke="#009900"/>
<line x1="318" y1="463" x2="318.43" y2="460.03" stroke="#009900"/>
<line x1="318" y1="463" x2="320.97" y2="462.57" stroke="#009900"/>
<line x1="325" y1="464" x2="320.5" y2="468.5" stroke="#009900"/>
<line x1="320.5" y1="468.5" x2="320.93" y2="465.53" stroke="#009900"/>
<line x1="320.5" y1="468.5" x2="323.47" y2="468.07" stroke="#009900"/>
<rect x="331" y="442" width="3" height="3" fill="#009900"/>
<polyline points="500.5,443.5 500.5,483.5" fill="none" stroke="#009900" stroke-width="1" shape-rendering="crispEdges" stroke-linecap="square"/>
<polyline points="492.5,470.5 508.5,470.5" fill="none" stroke="#009900" stroke-width="1" shape-rendering="crispEdges" stroke-linecap="square"/>
<polygon points="492.5,456.5 508.5,456.5 500.5,470.5" fill="none" stroke="#009900" stroke-width="1"/>
<line x1="490.5" y1="458.5" x2="486" y2="463" stroke="#009900"/>
<line x1="486" y1="463" x2="486.43" y2="460.03" stroke="#009900"/>
<line x1="486" y1="463" x2="488.97" y2="462.57" stroke="#009900"/>
<line x1="493" y1="464" x2="488.5" y2="468.5" stroke="#009900"/>
<line x1="488.5" y1="468.5" x2="488.93" y2="465.53" stroke="#009900"/>
<line x1="488.5" y1="468.5" x2="491.47" y2="468.07" stroke="#009900"/>
<rect x="499" y="442" width="3" height="3" fill="#009900"/>
<polyline points="356.5,435.5 364.5,435.5" fill="none" stroke="#009900" stroke-width="1" shape-rendering="crispEdges" stroke-linecap="square"/>
<polyline points="364.5,435.5 364.5,441.5 372.5,441.5" fill="none" stroke="#009c9c" stroke-width="1" shape-rendering="crispEdges" stroke-linecap="square"/>
<rect x="372.5" y="433.5" width="8" height="16" fill="#ffff00" stroke="#009494" stroke-width="1"/>
<polyline points="381.5,441.5 388.5,441.5 388.5,451.5 360.5,451.5" fill="none" stroke="#009c9c" stroke-width="1" shape-rendering="crispEdges" stroke-linecap="square"/>
<polyline points="356.5,451.5 360.5,451.5" fill="none" stroke="#009900" stroke-width="1" shape-rendering="crispEdges" stroke-linecap="square"/>
<polyline points="396.5,419.5 388.5,419.5" fill="none" stroke="#009900" stroke-width="1" shape-rendering="crispEdges" stroke-linecap="square"/>
<polyline points="388.5,419.5 388.5,425.5 385.5,425.5" fill="none" stroke="#009c9c" stroke-width="1" shape-rendering="crispEdges" stroke-linecap="square"/>
<polyline points="385.5,425.5 368.5,422.5" fill="none" stroke="#009900" stroke-width="1" shape-rendering="crispEdges"/>
<polyline points="396.5,435.5 388.5,435.5" fill="none" stroke="#009900" stroke-width="1" shape-rendering="crispEdges" stroke-linecap="square"/>
<polyline points="388.5,435.5 388.5,430.5 369.5,430.5 369.5,428.5" fill="none" stroke="#009c9c" stroke-width="1" shape-rendering="crispEdges" stroke-linecap="square"/>
<polyline points="376.5,433.5 376.5,427.5" fill="none" stroke="#909090" stroke-width="1" shape-rendering="crispEdges"/>
<path d="M355 434l3 3m0 -3l-3 3" stroke="#ff0000" stroke-width="1" fill="none"/>
<path d="M355 450l3 3m0 -3l-3 3" stroke="#ff0000" stroke-width="1" fill="none"/>
<path d="M395 418l3 3m0 -3l-3 3" stroke="#ff0000" stroke-width="1" fill="none"/>
<path d="M395 434l3 3m0 -3l-3 3" stroke="#ff0000" stroke-width="1" fill="none"/>
<polyline points="516.5,435.5 524.5,435.5" fill="none" stroke="#009900" stroke-width="1" shape-rendering="crispEdges" stroke-linecap="square"/>
<polyline points="524.5,435.5 524.5,441.5 532.5,441.5" fill="none" stroke="#009c9c" stroke-width="1" shape-rendering="crispEdges" stroke-linecap="square"/>
<rect x="532.5" y="433.5" width="8" height="16" fill="#ffff00" stroke="#009494" stroke-width="1"/>
<polyline points="541.5,441.5 548.5,441.5 548.5,451.5 520.5,451.5" fill="none" stroke="#009c9c" stroke-width="1" shape-rendering="crispEdges" stroke-linecap="square"/>
<polyline points="516.5,451.5 520.5,451.5" fill="none" stroke="#009900" stroke-width="1" shape-rendering="crispEdges" stroke-linecap="square"/>
<polyline points="556.5,419.5 548.5,419.5" fill="none" stroke="#009900" stroke-width="1" shape-rendering="crispEdges" stroke-linecap="square"/>
<polyline points="548.5,419.5 548.5,425.5 545.5,425.5" fill="none" stroke="#009c9c" stroke-width="1" shape-rendering="crispEdges" stroke-linecap="square"/>
<polyline points="545.5,425.5 528.5,422.5" fill="none" stroke="#009900" stroke-width="1" shape-rendering="crispEdges"/>
<polyline points="556.5,435.5 548.5,435.5" fill="none" stroke="#009900" stroke-width="1" shape-rendering="crispEdges" stroke-linecap="square"/>
<polyline points="548.5,435.5 548.5,430.5 529.5,430.5 529.5,428.5" fill="none" stroke="#009c9c" stroke-width="1" shape-rendering="crispEdges" stroke-linecap="square"/>
<polyline points="536.5,433.5 536.5,427.5" fill="none" stroke="#909090" stroke-width="1" shape-rendering="crispEdges"/>
<path d="M515 434l3 3m0 -3l-3 3" stroke="#ff0000" stroke-width="1" fill="none"/>
<path d="M515 450l3 3m0 -3l-3 3" stroke="#ff0000" stroke-width="1" fill="none"/>
<path d="M555 418l3 3m0 -3l-3 3" stroke="#ff0000" stroke-width="1" fill="none"/>
<path d="M555 434l3 3m0 -3l-3 3" stroke="#ff0000" stroke-width="1" fill="none"/>
<polyline points="516.5,243.5 516.5,283.5" fill="none" stroke="#009900" stroke-width="1" shape-rendering="crispEdges" stroke-linecap="square"/>
<polygon points="508.5,256.5 524.5,256.5 516.5,270.5" fill="none" stroke="#009900" stroke-width="1"/>
<polyline points="509.5,270.5 524.5,270.5" fill="none" stroke="#009900" stroke-width="1" shape-rendering="crispEdges" stroke-linecap="square"/>
<polyline points="513.5,270.5 500.5,283.5 476.5,283.5" fill="none" stroke="#009900" stroke-width="1"/>
<rect x="515" y="242" width="3" height="3" fill="#009900"/>
<rect x="515" y="282" width="3" height="3" fill="#009900"/>
<rect x="515" y="269" width="3" height="3" fill="#009900"/>
<rect x="475" y="282" width="3" height="3" fill="#009900"/>
<polyline points="580.5,307.5 580.5,324.5" fill="none" stroke="#009900" stroke-width="1" shape-rendering="crispEdges" stroke-linecap="square"/>
<polyline points="580.5,330.5 580.5,347.5" fill="none" stroke="#009900" stroke-width="1" shape-rendering="crispEdges" stroke-linecap="square"/>
<polyline points="572.5,324.5 587.5,324.5" fill="none" stroke="#009900" stroke-width="1" shape-rendering="crispEdges" stroke-linecap="square"/>
<polyline points="572.5,330.5 587.5,330.5" fill="none" stroke="#009900" stroke-width="1" shape-rendering="crispEdges" stroke-linecap="square"/>
<rect x="579" y="306" width="3" height="3" fill="#009900"/>
<rect x="579" y="346" width="3" height="3" fill="#009900"/>
<polyline points="836.5,443.5 836.5,460.5" fill="none" stroke="#009900" stroke-width="1" shape-rendering="crispEdges" stroke-linecap="square"/>
<polyline points="836.5,466.5 836.5,483.5" fill="none" stroke="#009900" stroke-width="1" shape-rendering="crispEdges" stroke-linecap="square"/>
<polyline points="828.5,460.5 843.5,460.5" fill="none" stroke="#009900" stroke-width="1" shape-rendering="crispEdges" stroke-linecap="square"/>
<polyline points="828.5,466.5 843.5,466.5" fill="none" stroke="#009900" stroke-width="1" shape-rendering="crispEdges" stroke-linecap="square"/>
<rect x="835.5" y="442.5" width="2" height="2" fill="#ffffff" stroke="#009900" stroke-width="1"/>
<rect x="835" y="482" width="3" height="3" fill="#009900"/>
<polygon points="644.5,188.5 669,211.5 644.5,235.5 621,211.5" fill="none" stroke="#101010" stroke-width="1.15"/>
<polygon points="636.68,196.15 632.88,207.99 624.76,199.7" fill="#ffffff" stroke="#101010" stroke-width="1.15"/>
<line x1="640.95" y1="200.51" x2="632.41" y2="191.79" stroke="#101010" stroke-width="1.15"/>
<polygon points="652.74,196.24 664.73,199.54 656.79,207.99" fill="#ffffff" stroke="#101010" stroke-width="1.15"/>
<line x1="656.92" y1="191.79" x2="648.57" y2="200.68" stroke="#101010" stroke-width="1.15"/>
<polygon points="628.9,219.57 640.74,223.37 632.45,231.49" fill="#ffffff" stroke="#101010" stroke-width="1.15"/>
<line x1="633.26" y1="215.3" x2="624.54" y2="223.84" stroke="#101010" stroke-width="1.15"/>
<polygon points="660.68,219.65 656.88,231.49 648.76,223.21" fill="#ffffff" stroke="#101010" stroke-width="1.15"/>
<line x1="664.95" y1="224.01" x2="656.41" y2="215.29" stroke="#101010" stroke-width="1.15"/>
<polyline points="644.5,179.5 644.5,188.5" fill="none" stroke="#009900" stroke-width="1" shape-rendering="crispEdges" stroke-linecap="square"/>
<polyline points="612.5,211.5 621.5,211.5" fill="none" stroke="#009900" stroke-width="1" shape-rendering="crispEdges" stroke-linecap="square"/>
<polyline points="668.5,211.5 676.5,211.5" fill="none" stroke="#009900" stroke-width="1" shape-rendering="crispEdges" stroke-linecap="square"/>
<polyline points="644.5,235.5 644.5,243.5" fill="none" stroke="#009900" stroke-width="1" shape-rendering="crispEdges" stroke-linecap="square"/>
<path d="M643 178l3 3m0 -3l-3 3" stroke="#ff0000" stroke-width="1" fill="none"/>
<path d="M611 210l3 3m0 -3l-3 3" stroke="#ff0000" stroke-width="1" fill="none"/>
<path d="M675 210l3 3m0 -3l-3 3" stroke="#ff0000" stroke-width="1" fill="none"/>
<path d="M643 242l3 3m0 -3l-3 3" stroke="#ff0000" stroke-width="1" fill="none"/>
<polygon points="804.5,348.5 829,371.5 804.5,395.5 781,371.5" fill="none" stroke="#101010" stroke-width="1.15"/>
<polygon points="796.68,356.15 792.88,367.99 784.76,359.7" fill="#ffffff" stroke="#101010" stroke-width="1.15"/>
<line x1="800.95" y1="360.51" x2="792.41" y2="351.79" stroke="#101010" stroke-width="1.15"/>
<polygon points="812.74,356.24 824.73,359.54 816.79,367.99" fill="#ffffff" stroke="#101010" stroke-width="1.15"/>
<line x1="816.92" y1="351.79" x2="808.57" y2="360.68" stroke="#101010" stroke-width="1.15"/>
<polygon points="788.9,379.57 800.74,383.37 792.45,391.49" fill="#ffffff" stroke="#101010" stroke-width="1.15"/>
<line x1="793.26" y1="375.3" x2="784.54" y2="383.84" stroke="#101010" stroke-width="1.15"/>
<polygon points="820.68,379.65 816.88,391.49 808.76,383.21" fill="#ffffff" stroke="#101010" stroke-width="1.15"/>
<line x1="824.95" y1="384.01" x2="816.41" y2="375.29" stroke="#101010" stroke-width="1.15"/>
<polyline points="804.5,339.5 804.5,348.5" fill="none" stroke="#009900" stroke-width="1" shape-rendering="crispEdges" stroke-linecap="square"/>
<polyline points="772.5,371.5 781.5,371.5" fill="none" stroke="#009900" stroke-width="1" shape-rendering="crispEdges" stroke-linecap="square"/>
<polyline points="828.5,371.5 836.5,371.5" fill="none" stroke="#009900" stroke-width="1" shape-rendering="crispEdges" stroke-linecap="square"/>
<polyline points="804.5,395.5 804.5,403.5" fill="none" stroke="#009900" stroke-width="1" shape-rendering="crispEdges" stroke-linecap="square"/>
<path d="M803 338l3 3m0 -3l-3 3" stroke="#ff0000" stroke-width="1" fill="none"/>
<path d="M771 370l3 3m0 -3l-3 3" stroke="#ff0000" stroke-width="1" fill="none"/>
<path d="M835 370l3 3m0 -3l-3 3" stroke="#ff0000" stroke-width="1" fill="none"/>
<path d="M803 402l3 3m0 -3l-3 3" stroke="#ff0000" stroke-width="1" fill="none"/>
<polyline points="676.5,219.5 684.5,219.5" fill="none" stroke="#009900" stroke-width="1" shape-rendering="crispEdges" stroke-linecap="square"/>
<polyline points="676.5,259.5 684.5,259.5" fill="none" stroke="#009900" stroke-width="1" shape-rendering="crispEdges" stroke-linecap="square"/>
<path d="M684.5 219.5L684.5 228.5C692.5 228.87 692.5 235.47 684.5 235.83C692.5 236.2 692.5 242.8 684.5 243.17C692.5 243.53 692.5 250.13 684.5 250.5L684.5 259.5" fill="none" stroke="#009900" stroke-width="1.2"/>
<polyline points="716.5,219.5 708.5,219.5" fill="none" stroke="#009900" stroke-width="1" shape-rendering="crispEdges" stroke-linecap="square"/>
<polyline points="716.5,259.5 708.5,259.5" fill="none" stroke="#009900" stroke-width="1" shape-rendering="crispEdges" stroke-linecap="square"/>
<path d="M708.5 219.5L708.5 228.5C700.5 228.87 700.5 235.47 708.5 235.83C700.5 236.2 700.5 242.8 708.5 243.17C700.5 243.53 700.5 250.13 708.5 250.5L708.5 259.5" fill="none" stroke="#009900" stroke-width="1.2"/>
<polyline points="696.5,231.5 696.5,250.5" fill="none" stroke="#009900" stroke-width="1" shape-rendering="crispEdges" stroke-linecap="square"/>
<rect x="687" y="223" width="1" height="1" fill="#009900"/>
<rect x="705" y="223" width="1" height="1" fill="#009900"/>
<polyline points="716.5,339.5 724.5,339.5" fill="none" stroke="#009900" stroke-width="1" shape-rendering="crispEdges" stroke-linecap="square"/>
<polyline points="716.5,379.5 724.5,379.5" fill="none" stroke="#009900" stroke-width="1" shape-rendering="crispEdges" stroke-linecap="square"/>
<path d="M724.5 339.5L724.5 348.5C732.5 348.87 732.5 355.47 724.5 355.83C732.5 356.2 732.5 362.8 724.5 363.17C732.5 363.53 732.5 370.13 724.5 370.5L724.5 379.5" fill="none" stroke="#009900" stroke-width="1.2"/>
<polyline points="756.5,339.5 748.5,339.5" fill="none" stroke="#009900" stroke-width="1" shape-rendering="crispEdges" stroke-linecap="square"/>
<polyline points="756.5,379.5 748.5,379.5" fill="none" stroke="#009900" stroke-width="1" shape-rendering="crispEdges" stroke-linecap="square"/>
<path d="M748.5 339.5L748.5 348.5C740.5 348.87 740.5 355.47 748.5 355.83C740.5 356.2 740.5 362.8 748.5 363.17C740.5 363.53 740.5 370.13 748.5 370.5L748.5 379.5" fill="none" stroke="#009900" stroke-width="1.2"/>
<polyline points="736.5,351.5 736.5,370.5" fill="none" stroke="#009900" stroke-width="1" shape-rendering="crispEdges" stroke-linecap="square"/>
<rect x="727" y="343" width="1" height="1" fill="#009900"/>
<rect x="745" y="343" width="1" height="1" fill="#009900"/>
<rect x="675.5" y="258.5" width="2" height="2" fill="#ffffff" stroke="#009900" stroke-width="1"/>
<rect x="715.5" y="378.5" width="2" height="2" fill="#ffffff" stroke="#009900" stroke-width="1"/>
<rect x="715" y="218" width="3" height="3" fill="#009900"/>
<rect x="715" y="258" width="3" height="3" fill="#009900"/>
<rect x="675" y="218" width="3" height="3" fill="#009900"/>
<rect x="715" y="338" width="3" height="3" fill="#009900"/>
<rect x="755" y="338" width="3" height="3" fill="#009900"/>
<rect x="755" y="378" width="3" height="3" fill="#009900"/>
<polyline points="860.5,483.5 860.5,492.5" fill="none" stroke="#009900" stroke-width="1" shape-rendering="crispEdges" stroke-linecap="square"/>
<polyline points="853.5,492.5 867.5,492.5" fill="none" stroke="#009900" stroke-width="1" shape-rendering="crispEdges" stroke-linecap="square"/>
<polyline points="857.5,495.5 864.5,495.5" fill="none" stroke="#009900" stroke-width="1" shape-rendering="crispEdges" stroke-linecap="square"/>
<rect x="860" y="498" width="1" height="1" fill="#009900"/>
<rect x="859" y="482" width="3" height="3" fill="#009900"/>
<polyline points="524.5,507.5 524.5,515.5" fill="none" stroke="#009900" stroke-width="1" shape-rendering="crispEdges" stroke-linecap="square"/>
<polyline points="524.5,515.5 531.5,515.5 531.5,519.5" fill="none" stroke="#009c9c" stroke-width="1" shape-rendering="crispEdges" stroke-linecap="square"/>
<polyline points="540.5,507.5 540.5,515.5" fill="none" stroke="#009900" stroke-width="1" shape-rendering="crispEdges" stroke-linecap="square"/>
<polyline points="540.5,515.5 535.5,515.5 535.5,534.5 533.5,534.5" fill="none" stroke="#009c9c" stroke-width="1" shape-rendering="crispEdges" stroke-linecap="square"/>
<polyline points="532.5,527.5 538.5,527.5" fill="none" stroke="#909090" stroke-width="1" shape-rendering="crispEdges"/>
<rect x="538.5" y="523.5" width="16" height="8" fill="#ffff00" stroke="#009494" stroke-width="1"/>
<polyline points="546.5,523.5 546.5,515.5 556.5,515.5 556.5,543.5" fill="none" stroke="#009c9c" stroke-width="1" shape-rendering="crispEdges" stroke-linecap="square"/>
<polyline points="556.5,543.5 556.5,547.5" fill="none" stroke="#009900" stroke-width="1" shape-rendering="crispEdges" stroke-linecap="square"/>
<polyline points="546.5,531.5 546.5,539.5 540.5,539.5 540.5,543.5" fill="none" stroke="#009c9c" stroke-width="1" shape-rendering="crispEdges" stroke-linecap="square"/>
<polyline points="540.5,543.5 540.5,547.5" fill="none" stroke="#009900" stroke-width="1" shape-rendering="crispEdges" stroke-linecap="square"/>
<polyline points="571,479.5 568,496" fill="none" stroke="#009900" stroke-width="1" shape-rendering="crispEdges"/>
<path d="M523 506l3 3m0 -3l-3 3" stroke="#ff0000" stroke-width="1" fill="none"/>
<path d="M539 506l3 3m0 -3l-3 3" stroke="#ff0000" stroke-width="1" fill="none"/>
<path d="M539 546l3 3m0 -3l-3 3" stroke="#ff0000" stroke-width="1" fill="none"/>
<path d="M555 546l3 3m0 -3l-3 3" stroke="#ff0000" stroke-width="1" fill="none"/>
<polyline points="540.5,579.5 540.5,619.5" fill="none" stroke="#009900" stroke-width="1" shape-rendering="crispEdges" stroke-linecap="square"/>
<polyline points="532.5,592.5 548.5,592.5" fill="none" stroke="#009900" stroke-width="1" shape-rendering="crispEdges" stroke-linecap="square"/>
<polygon points="540.5,592.5 548.5,606.5 532.5,606.5" fill="none" stroke="#009900" stroke-width="1"/>
<line x1="549" y1="599.5" x2="553.5" y2="595" stroke="#009900"/>
<line x1="553.5" y1="595" x2="553.07" y2="597.97" stroke="#009900"/>
<line x1="553.5" y1="595" x2="550.53" y2="595.43" stroke="#009900"/>
<line x1="552" y1="605" x2="556.5" y2="600.5" stroke="#009900"/>
<line x1="556.5" y1="600.5" x2="556.07" y2="603.47" stroke="#009900"/>
<line x1="556.5" y1="600.5" x2="553.53" y2="600.93" stroke="#009900"/>
<rect x="539.5" y="578.5" width="2" height="2" fill="#ffffff" stroke="#009900" stroke-width="1"/>
<rect x="539" y="618" width="3" height="3" fill="#009900"/>
<polyline points="564.5,507.5 564.5,515.5" fill="none" stroke="#009900" stroke-width="1" shape-rendering="crispEdges" stroke-linecap="square"/>
<polyline points="564.5,515.5 571.5,515.5 571.5,519.5" fill="none" stroke="#009c9c" stroke-width="1" shape-rendering="crispEdges" stroke-linecap="square"/>
<polyline points="580.5,507.5 580.5,515.5" fill="none" stroke="#009900" stroke-width="1" shape-rendering="crispEdges" stroke-linecap="square"/>
<polyline points="580.5,515.5 575.5,515.5 575.5,534.5 573.5,534.5" fill="none" stroke="#009c9c" stroke-width="1" shape-rendering="crispEdges" stroke-linecap="square"/>
<polyline points="572.5,527.5 578.5,527.5" fill="none" stroke="#909090" stroke-width="1" shape-rendering="crispEdges"/>
<rect x="578.5" y="523.5" width="16" height="8" fill="#ffff00" stroke="#009494" stroke-width="1"/>
<polyline points="586.5,523.5 586.5,515.5 596.5,515.5 596.5,543.5" fill="none" stroke="#009c9c" stroke-width="1" shape-rendering="crispEdges" stroke-linecap="square"/>
<polyline points="596.5,543.5 596.5,547.5" fill="none" stroke="#009900" stroke-width="1" shape-rendering="crispEdges" stroke-linecap="square"/>
<polyline points="586.5,531.5 586.5,539.5 580.5,539.5 580.5,543.5" fill="none" stroke="#009c9c" stroke-width="1" shape-rendering="crispEdges" stroke-linecap="square"/>
<polyline points="580.5,543.5 580.5,547.5" fill="none" stroke="#009900" stroke-width="1" shape-rendering="crispEdges" stroke-linecap="square"/>
<polyline points="611,479.5 608,496" fill="none" stroke="#009900" stroke-width="1" shape-rendering="crispEdges"/>
<path d="M563 506l3 3m0 -3l-3 3" stroke="#ff0000" stroke-width="1" fill="none"/>
<path d="M579 506l3 3m0 -3l-3 3" stroke="#ff0000" stroke-width="1" fill="none"/>
<path d="M579 546l3 3m0 -3l-3 3" stroke="#ff0000" stroke-width="1" fill="none"/>
<path d="M595 546l3 3m0 -3l-3 3" stroke="#ff0000" stroke-width="1" fill="none"/>
<polyline points="580.5,579.5 580.5,619.5" fill="none" stroke="#009900" stroke-width="1" shape-rendering="crispEdges" stroke-linecap="square"/>
<polyline points="572.5,592.5 588.5,592.5" fill="none" stroke="#009900" stroke-width="1" shape-rendering="crispEdges" stroke-linecap="square"/>
<polygon points="580.5,592.5 588.5,606.5 572.5,606.5" fill="none" stroke="#009900" stroke-width="1"/>
<line x1="589" y1="599.5" x2="593.5" y2="595" stroke="#009900"/>
<line x1="593.5" y1="595" x2="593.07" y2="597.97" stroke="#009900"/>
<line x1="593.5" y1="595" x2="590.53" y2="595.43" stroke="#009900"/>
<line x1="592" y1="605" x2="596.5" y2="600.5" stroke="#009900"/>
<line x1="596.5" y1="600.5" x2="596.07" y2="603.47" stroke="#009900"/>
<line x1="596.5" y1="600.5" x2="593.53" y2="600.93" stroke="#009900"/>
<rect x="579.5" y="578.5" width="2" height="2" fill="#ffffff" stroke="#009900" stroke-width="1"/>
<rect x="579" y="618" width="3" height="3" fill="#009900"/>
<polyline points="604.5,507.5 604.5,515.5" fill="none" stroke="#009900" stroke-width="1" shape-rendering="crispEdges" stroke-linecap="square"/>
<polyline points="604.5,515.5 611.5,515.5 611.5,519.5" fill="none" stroke="#009c9c" stroke-width="1" shape-rendering="crispEdges" stroke-linecap="square"/>
<polyline points="620.5,507.5 620.5,515.5" fill="none" stroke="#009900" stroke-width="1" shape-rendering="crispEdges" stroke-linecap="square"/>
<polyline points="620.5,515.5 615.5,515.5 615.5,534.5 613.5,534.5" fill="none" stroke="#009c9c" stroke-width="1" shape-rendering="crispEdges" stroke-linecap="square"/>
<polyline points="612.5,527.5 618.5,527.5" fill="none" stroke="#909090" stroke-width="1" shape-rendering="crispEdges"/>
<rect x="618.5" y="523.5" width="16" height="8" fill="#ffff00" stroke="#009494" stroke-width="1"/>
<polyline points="626.5,523.5 626.5,515.5 636.5,515.5 636.5,543.5" fill="none" stroke="#009c9c" stroke-width="1" shape-rendering="crispEdges" stroke-linecap="square"/>
<polyline points="636.5,543.5 636.5,547.5" fill="none" stroke="#009900" stroke-width="1" shape-rendering="crispEdges" stroke-linecap="square"/>
<polyline points="626.5,531.5 626.5,539.5 620.5,539.5 620.5,543.5" fill="none" stroke="#009c9c" stroke-width="1" shape-rendering="crispEdges" stroke-linecap="square"/>
<polyline points="620.5,543.5 620.5,547.5" fill="none" stroke="#009900" stroke-width="1" shape-rendering="crispEdges" stroke-linecap="square"/>
<polyline points="651,479.5 648,496" fill="none" stroke="#009900" stroke-width="1" shape-rendering="crispEdges"/>
<path d="M603 506l3 3m0 -3l-3 3" stroke="#ff0000" stroke-width="1" fill="none"/>
<path d="M619 506l3 3m0 -3l-3 3" stroke="#ff0000" stroke-width="1" fill="none"/>
<path d="M619 546l3 3m0 -3l-3 3" stroke="#ff0000" stroke-width="1" fill="none"/>
<path d="M635 546l3 3m0 -3l-3 3" stroke="#ff0000" stroke-width="1" fill="none"/>
<polyline points="620.5,579.5 620.5,619.5" fill="none" stroke="#009900" stroke-width="1" shape-rendering="crispEdges" stroke-linecap="square"/>
<polyline points="612.5,592.5 628.5,592.5" fill="none" stroke="#009900" stroke-width="1" shape-rendering="crispEdges" stroke-linecap="square"/>
<polygon points="620.5,592.5 628.5,606.5 612.5,606.5" fill="none" stroke="#009900" stroke-width="1"/>
<line x1="629" y1="599.5" x2="633.5" y2="595" stroke="#009900"/>
<line x1="633.5" y1="595" x2="633.07" y2="597.97" stroke="#009900"/>
<line x1="633.5" y1="595" x2="630.53" y2="595.43" stroke="#009900"/>
<line x1="632" y1="605" x2="636.5" y2="600.5" stroke="#009900"/>
<line x1="636.5" y1="600.5" x2="636.07" y2="603.47" stroke="#009900"/>
<line x1="636.5" y1="600.5" x2="633.53" y2="600.93" stroke="#009900"/>
<rect x="619.5" y="578.5" width="2" height="2" fill="#ffffff" stroke="#009900" stroke-width="1"/>
<rect x="619" y="618" width="3" height="3" fill="#009900"/>
<polyline points="644.5,507.5 644.5,515.5" fill="none" stroke="#009900" stroke-width="1" shape-rendering="crispEdges" stroke-linecap="square"/>
<polyline points="644.5,515.5 651.5,515.5 651.5,519.5" fill="none" stroke="#009c9c" stroke-width="1" shape-rendering="crispEdges" stroke-linecap="square"/>
<polyline points="660.5,507.5 660.5,515.5" fill="none" stroke="#009900" stroke-width="1" shape-rendering="crispEdges" stroke-linecap="square"/>
<polyline points="660.5,515.5 655.5,515.5 655.5,534.5 653.5,534.5" fill="none" stroke="#009c9c" stroke-width="1" shape-rendering="crispEdges" stroke-linecap="square"/>
<polyline points="652.5,527.5 658.5,527.5" fill="none" stroke="#909090" stroke-width="1" shape-rendering="crispEdges"/>
<rect x="658.5" y="523.5" width="16" height="8" fill="#ffff00" stroke="#009494" stroke-width="1"/>
<polyline points="666.5,523.5 666.5,515.5 676.5,515.5 676.5,543.5" fill="none" stroke="#009c9c" stroke-width="1" shape-rendering="crispEdges" stroke-linecap="square"/>
<polyline points="676.5,543.5 676.5,547.5" fill="none" stroke="#009900" stroke-width="1" shape-rendering="crispEdges" stroke-linecap="square"/>
<polyline points="666.5,531.5 666.5,539.5 660.5,539.5 660.5,543.5" fill="none" stroke="#009c9c" stroke-width="1" shape-rendering="crispEdges" stroke-linecap="square"/>
<polyline points="660.5,543.5 660.5,547.5" fill="none" stroke="#009900" stroke-width="1" shape-rendering="crispEdges" stroke-linecap="square"/>
<polyline points="691,479.5 688,496" fill="none" stroke="#009900" stroke-width="1" shape-rendering="crispEdges"/>
<path d="M643 506l3 3m0 -3l-3 3" stroke="#ff0000" stroke-width="1" fill="none"/>
<path d="M659 506l3 3m0 -3l-3 3" stroke="#ff0000" stroke-width="1" fill="none"/>
<path d="M659 546l3 3m0 -3l-3 3" stroke="#ff0000" stroke-width="1" fill="none"/>
<path d="M675 546l3 3m0 -3l-3 3" stroke="#ff0000" stroke-width="1" fill="none"/>
<polyline points="660.5,579.5 660.5,619.5" fill="none" stroke="#009900" stroke-width="1" shape-rendering="crispEdges" stroke-linecap="square"/>
<polyline points="652.5,592.5 668.5,592.5" fill="none" stroke="#009900" stroke-width="1" shape-rendering="crispEdges" stroke-linecap="square"/>
<polygon points="660.5,592.5 668.5,606.5 652.5,606.5" fill="none" stroke="#009900" stroke-width="1"/>
<line x1="669" y1="599.5" x2="673.5" y2="595" stroke="#009900"/>
<line x1="673.5" y1="595" x2="673.07" y2="597.97" stroke="#009900"/>
<line x1="673.5" y1="595" x2="670.53" y2="595.43" stroke="#009900"/>
<line x1="672" y1="605" x2="676.5" y2="600.5" stroke="#009900"/>
<line x1="676.5" y1="600.5" x2="676.07" y2="603.47" stroke="#009900"/>
<line x1="676.5" y1="600.5" x2="673.53" y2="600.93" stroke="#009900"/>
<rect x="659.5" y="578.5" width="2" height="2" fill="#ffffff" stroke="#009900" stroke-width="1"/>
<rect x="659" y="618" width="3" height="3" fill="#009900"/>
<circle cx="124.5" cy="163.5" r="2.9" fill="#000036"/>
<circle cx="164.5" cy="163.5" r="2.9" fill="#000036"/>
<circle cx="204.5" cy="163.5" r="2.9" fill="#000036"/>
<circle cx="332.5" cy="163.5" r="2.9" fill="#000036"/>
<circle cx="84.5" cy="355.5" r="2.9" fill="#000036"/>
<circle cx="156.5" cy="339.5" r="2.9" fill="#000036"/>
<circle cx="156.5" cy="395.5" r="2.9" fill="#000036"/>
<circle cx="156.5" cy="483.5" r="2.9" fill="#000036"/>
<circle cx="204.5" cy="483.5" r="2.9" fill="#000036"/>
<circle cx="212.5" cy="483.5" r="2.9" fill="#000036"/>
<circle cx="300.5" cy="483.5" r="2.9" fill="#000036"/>
<circle cx="308.5" cy="483.5" r="2.9" fill="#000036"/>
<circle cx="332.5" cy="483.5" r="2.9" fill="#000036"/>
<circle cx="356.5" cy="483.5" r="2.9" fill="#000036"/>
<circle cx="364.5" cy="483.5" r="2.9" fill="#000036"/>
<circle cx="476.5" cy="483.5" r="2.9" fill="#000036"/>
<circle cx="500.5" cy="483.5" r="2.9" fill="#000036"/>
<circle cx="516.5" cy="483.5" r="2.9" fill="#000036"/>
<circle cx="580.5" cy="483.5" r="2.9" fill="#000036"/>
<circle cx="644.5" cy="483.5" r="2.9" fill="#000036"/>
<circle cx="652.5" cy="483.5" r="2.9" fill="#000036"/>
<circle cx="780.5" cy="483.5" r="2.9" fill="#000036"/>
<circle cx="836.5" cy="483.5" r="2.9" fill="#000036"/>
<circle cx="844.5" cy="483.5" r="2.9" fill="#000036"/>
<circle cx="84.5" cy="483.5" r="2.9" fill="#000036"/>
<circle cx="300.5" cy="427.5" r="2.9" fill="#000036"/>
<circle cx="332.5" cy="379.5" r="2.9" fill="#000036"/>
<circle cx="356.5" cy="451.5" r="2.9" fill="#000036"/>
<circle cx="460.5" cy="323.5" r="2.9" fill="#000036"/>
<circle cx="476.5" cy="371.5" r="2.9" fill="#000036"/>
<circle cx="484.5" cy="371.5" r="2.9" fill="#000036"/>
<circle cx="516.5" cy="403.5" r="2.9" fill="#000036"/>
<circle cx="540.5" cy="179.5" r="2.9" fill="#000036"/>
<circle cx="580.5" cy="179.5" r="2.9" fill="#000036"/>
<circle cx="644.5" cy="179.5" r="2.9" fill="#000036"/>
<circle cx="756.5" cy="219.5" r="2.9" fill="#000036"/>
<circle cx="716.5" cy="291.5" r="2.9" fill="#000036"/>
<circle cx="716.5" cy="315.5" r="2.9" fill="#000036"/>
<circle cx="836.5" cy="371.5" r="2.9" fill="#000036"/>
<circle cx="836.5" cy="491.5" r="2.9" fill="#000036"/>
<circle cx="596.5" cy="563.5" r="2.9" fill="#000036"/>
<circle cx="636.5" cy="563.5" r="2.9" fill="#000036"/>
<circle cx="676.5" cy="563.5" r="2.9" fill="#000036"/>
<rect x="83" y="482" width="3" height="3" fill="#009900"/>
<rect x="299" y="482" width="3" height="3" fill="#009900"/>
<rect x="331" y="482" width="3" height="3" fill="#009900"/>
<rect x="499" y="482" width="3" height="3" fill="#009900"/>
<rect x="835" y="482" width="3" height="3" fill="#009900"/>
<rect x="299" y="426" width="3" height="3" fill="#009900"/>
<rect x="331" y="378" width="3" height="3" fill="#009900"/>
<rect x="459" y="322" width="3" height="3" fill="#009900"/>
<path d="M355 450l3 3m0 -3l-3 3" stroke="#ff0000" stroke-width="1" fill="none"/>
<path d="M483 370l3 3m0 -3l-3 3" stroke="#ff0000" stroke-width="1" fill="none"/>
<path d="M643 178l3 3m0 -3l-3 3" stroke="#ff0000" stroke-width="1" fill="none"/>
<path d="M835 370l3 3m0 -3l-3 3" stroke="#ff0000" stroke-width="1" fill="none"/>
<text x="73.7" y="220" font-size="11" fill="#009494" textLength="42" lengthAdjust="spacingAndGlyphs" transform="rotate(-90 73.7 220)" stroke="#009494" stroke-width=".25">R4 10,0k</text>
<text x="113.7" y="218" font-size="11" fill="#009494" textLength="39" lengthAdjust="spacingAndGlyphs" transform="rotate(-90 113.7 218)" stroke="#009494" stroke-width=".25">R5 1,0M</text>
<text x="188.2" y="250" font-size="11" fill="#009494" textLength="42" lengthAdjust="spacingAndGlyphs" transform="rotate(-90 188.2 250)" stroke="#009494" stroke-width=".25">C1 10,0n</text>
<text x="70.7" y="468.5" font-size="11" fill="#009494" textLength="41.5" lengthAdjust="spacingAndGlyphs" transform="rotate(-90 70.7 468.5)" stroke="#009494" stroke-width=".25">C3 10,0u</text>
<text x="142.7" y="461" font-size="11" fill="#009494" textLength="42.5" lengthAdjust="spacingAndGlyphs" transform="rotate(-90 142.7 461)" stroke="#009494" stroke-width=".25">C2 47,0u</text>
<text x="464.2" y="267" font-size="11" fill="#009494" textLength="35" lengthAdjust="spacingAndGlyphs" transform="rotate(-90 464.2 267)" stroke="#009494" stroke-width=".25">R7 1,0k</text>
<text x="284.7" y="413" font-size="11" fill="#009494" textLength="35.5" lengthAdjust="spacingAndGlyphs" transform="rotate(-90 284.7 413)" stroke="#009494" stroke-width=".25">R2 4,7k</text>
<text x="320.7" y="420" font-size="11" fill="#009494" textLength="35" lengthAdjust="spacingAndGlyphs" transform="rotate(-90 320.7 420)" stroke="#009494" stroke-width=".25">R8 1,0k</text>
<text x="290.2" y="478.5" font-size="11" fill="#009494" textLength="35" lengthAdjust="spacingAndGlyphs" transform="rotate(-90 290.2 478.5)" stroke="#009494" stroke-width=".25">R3 1,0k</text>
<text x="492.7" y="423" font-size="11" fill="#009494" textLength="35" lengthAdjust="spacingAndGlyphs" transform="rotate(-90 492.7 423)" stroke="#009494" stroke-width=".25">R9 1,0k</text>
<text x="447.7" y="464" font-size="11" fill="#009494" textLength="35" lengthAdjust="spacingAndGlyphs" transform="rotate(-90 447.7 464)" stroke="#009494" stroke-width=".25">R6 4,7k</text>
<text x="536.2" y="293" font-size="11" fill="#009494" textLength="36" lengthAdjust="spacingAndGlyphs" transform="rotate(-90 536.2 293)" stroke="#009494" stroke-width=".25">2N1595</text>
<text x="564.2" y="331" font-size="11" fill="#009494" textLength="39" lengthAdjust="spacingAndGlyphs" transform="rotate(-90 564.2 331)" stroke="#009494" stroke-width=".25">C4 1,0m</text>
<text x="626.2" y="323" font-size="11" fill="#009494" textLength="60" lengthAdjust="spacingAndGlyphs" transform="rotate(-90 626.2 323)" stroke="#009494" stroke-width=".25">GR1 1N1183</text>
<text x="745.7" y="459" font-size="11" fill="#009494" textLength="60" lengthAdjust="spacingAndGlyphs" transform="rotate(-90 745.7 459)" stroke="#009494" stroke-width=".25">GR2 1N1183</text>
<text x="822.7" y="468.5" font-size="11" fill="#009494" textLength="38" lengthAdjust="spacingAndGlyphs" transform="rotate(-90 822.7 468.5)" stroke="#009494" stroke-width=".25">C5 1,0m</text>
<text x="535.2" y="505" font-size="11" fill="#009494" textLength="18" lengthAdjust="spacingAndGlyphs" transform="rotate(-90 535.2 505)" stroke="#009494" stroke-width=".25">RL3</text>
<text x="577.2" y="508" font-size="11" fill="#009494" textLength="18" lengthAdjust="spacingAndGlyphs" transform="rotate(-90 577.2 508)" stroke="#009494" stroke-width=".25">RL4</text>
<text x="620.7" y="505" font-size="11" fill="#009494" textLength="18" lengthAdjust="spacingAndGlyphs" transform="rotate(-90 620.7 505)" stroke="#009494" stroke-width=".25">RL5</text>
<text x="664.2" y="508" font-size="11" fill="#009494" textLength="18.5" lengthAdjust="spacingAndGlyphs" transform="rotate(-90 664.2 508)" stroke="#009494" stroke-width=".25">RL6</text>
<text x="709.7" y="658" font-size="11" fill="#009494" textLength="69.5" lengthAdjust="spacingAndGlyphs" transform="rotate(-90 709.7 658)" stroke="#009494" stroke-width=".25">LED3 CQX35A</text>
<text x="731.2" y="658" font-size="11" fill="#009494" textLength="70.5" lengthAdjust="spacingAndGlyphs" transform="rotate(-90 731.2 658)" stroke="#009494" stroke-width=".25">LED2 CQX35A</text>
<text x="748.7" y="658" font-size="11" fill="#009494" textLength="69.5" lengthAdjust="spacingAndGlyphs" transform="rotate(-90 748.7 658)" stroke="#009494" stroke-width=".25">LED1 CQX35A</text>
<text x="766.7" y="658" font-size="11" fill="#009494" textLength="69.5" lengthAdjust="spacingAndGlyphs" transform="rotate(-90 766.7 658)" stroke="#009494" stroke-width=".25">LED4 CQX35A</text>
<text x="786.2" y="654" font-size="11" fill="#009494" textLength="68.5" lengthAdjust="spacingAndGlyphs" transform="rotate(-90 786.2 654)" stroke="#009494" stroke-width=".25">LED5 CQX35A</text>
<text x="807.7" y="654" font-size="11" fill="#009494" textLength="68.5" lengthAdjust="spacingAndGlyphs" transform="rotate(-90 807.7 654)" stroke="#009494" stroke-width=".25">LED6 CQX35A</text>
<text x="827.2" y="657.5" font-size="11" fill="#009494" textLength="69" lengthAdjust="spacingAndGlyphs" transform="rotate(-90 827.2 657.5)" stroke="#009494" stroke-width=".25">LED7 CQX35A</text>
<text x="260.5" y="299" font-size="11" fill="#009494" textLength="35.5" lengthAdjust="spacingAndGlyphs" stroke="#009494" stroke-width=".25">R1 1,0k</text>
<text x="340" y="300" font-size="11" fill="#009494" textLength="35" lengthAdjust="spacingAndGlyphs" stroke="#009494" stroke-width=".25">T2 !PNP</text>
<text x="340" y="347.5" font-size="11" fill="#009494" textLength="35" lengthAdjust="spacingAndGlyphs" stroke="#009494" stroke-width=".25">T3 !PNP</text>
<text x="524.5" y="363.5" font-size="11" fill="#009494" textLength="35" lengthAdjust="spacingAndGlyphs" stroke="#009494" stroke-width=".25">T1 !PNP</text>
<text x="367.5" y="399" font-size="11" fill="#009494" textLength="17" lengthAdjust="spacingAndGlyphs" stroke="#009494" stroke-width=".25">RL1</text>
<text x="537" y="398" font-size="11" fill="#009494" textLength="18" lengthAdjust="spacingAndGlyphs" stroke="#009494" stroke-width=".25">RL2</text>
<text x="687.5" y="203.5" font-size="11" fill="#009494" textLength="16" lengthAdjust="spacingAndGlyphs" stroke="#009494" stroke-width=".25">TR1</text>
<text x="692.5" y="357.5" font-size="11" fill="#009494" textLength="17.5" lengthAdjust="spacingAndGlyphs" stroke="#009494" stroke-width=".25">TR2</text>
<rect x="364.5" y="206.5" width="89" height="16" fill="#ffffff" stroke="#0000ff" stroke-width="1.2"/>
<text x="368" y="216.5" font-size="11" fill="#0000ff" textLength="81.5" lengthAdjust="spacingAndGlyphs" stroke="#0000ff" stroke-width=".2">ANÓD UT AC 1/2</text>
<rect x="531.5" y="188.5" width="27" height="16" fill="#ffffff" stroke="#0000ff" stroke-width="1.2"/>
<text x="535" y="198.5" font-size="11" fill="#0000ff" textLength="19.5" lengthAdjust="spacingAndGlyphs" stroke="#0000ff" stroke-width=".2">14V</text>
<rect x="707.5" y="191.5" width="51" height="16" fill="#ffffff" stroke="#0000ff" stroke-width="1.2"/>
<text x="711" y="202" font-size="11" fill="#0000ff" textLength="42.5" lengthAdjust="spacingAndGlyphs" stroke="#0000ff" stroke-width=".2">TR STBY</text>
<rect x="788.5" y="237.5" width="40" height="16" fill="#ffffff" stroke="#0000ff" stroke-width="1.2"/>
<text x="792" y="248" font-size="11" fill="#0000ff" textLength="32.5" lengthAdjust="spacingAndGlyphs" stroke="#0000ff" stroke-width=".2">230AC</text>
<rect x="739.5" y="311.5" width="66" height="16" fill="#ffffff" stroke="#0000ff" stroke-width="1.2"/>
<text x="743" y="321.5" font-size="11" fill="#0000ff" textLength="58.5" lengthAdjust="spacingAndGlyphs" stroke="#0000ff" stroke-width=".2">TR2 POWER</text>
<rect x="400.5" y="609.5" width="27" height="16" fill="#ffffff" stroke="#0000ff" stroke-width="1.2"/>
<text x="404" y="620" font-size="11" fill="#0000ff" textLength="20" lengthAdjust="spacingAndGlyphs" stroke="#0000ff" stroke-width=".2">OFF</text>
<rect x="447.5" y="610.5" width="22" height="16" fill="#ffffff" stroke="#0000ff" stroke-width="1.2"/>
<text x="451" y="621" font-size="11" fill="#0000ff" textLength="15" lengthAdjust="spacingAndGlyphs" stroke="#0000ff" stroke-width=".2">ON</text>
<rect x="489.5" y="610.5" width="34" height="16" fill="#ffffff" stroke="#0000ff" stroke-width="1.2"/>
<text x="492" y="621" font-size="11" fill="#0000ff" textLength="27.5" lengthAdjust="spacingAndGlyphs" stroke="#0000ff" stroke-width=".2">STBY</text>
<rect x="539.5" y="609.5" width="21" height="16" fill="#ffffff" stroke="#0000ff" stroke-width="1.2"/>
<text x="543" y="620" font-size="11" fill="#0000ff" textLength="13.5" lengthAdjust="spacingAndGlyphs" stroke="#0000ff" stroke-width=".2">CD</text>
<rect x="574.5" y="609.5" width="29" height="16" fill="#ffffff" stroke="#0000ff" stroke-width="1.2"/>
<text x="578" y="620" font-size="11" fill="#0000ff" textLength="22" lengthAdjust="spacingAndGlyphs" stroke="#0000ff" stroke-width=".2">DAC</text>
<rect x="615.5" y="609.5" width="29" height="16" fill="#ffffff" stroke="#0000ff" stroke-width="1.2"/>
<text x="619" y="620" font-size="11" fill="#0000ff" textLength="21.5" lengthAdjust="spacingAndGlyphs" stroke="#0000ff" stroke-width=".2">DVD</text>
<rect x="655.5" y="610.5" width="29" height="16" fill="#ffffff" stroke="#0000ff" stroke-width="1.2"/>
<text x="659" y="621.5" font-size="11" fill="#0000ff" textLength="22" lengthAdjust="spacingAndGlyphs" stroke="#0000ff" stroke-width=".2">AUX</text>
<rect x="567.5" y="646.5" width="91" height="16" fill="#ffffff" stroke="#0000ff" stroke-width="1.2"/>
<text x="570.5" y="657" font-size="11" fill="#0000ff" textLength="84" lengthAdjust="spacingAndGlyphs" stroke="#0000ff" stroke-width=".2">INPUT SELECTOR</text>
<rect x="541.5" y="660.5" width="13" height="16" fill="#ffffff" stroke="#0000ff" stroke-width="1.2"/>
<text x="545" y="671" font-size="11" fill="#0000ff" textLength="6" lengthAdjust="spacingAndGlyphs" stroke="#0000ff" stroke-width=".2">o</text>
</g>
<g id="statusbar">
<rect x="3" y="719" width="24" height="19" fill="url(#dith)"/>
<rect x="3" y="719" width="24" height="1" fill="#000000"/>
<rect x="3" y="719" width="1" height="19" fill="#000000"/>
<rect x="4" y="737" width="23" height="1" fill="#ffffff"/>
<rect x="26" y="720" width="1" height="18" fill="#ffffff"/>
<polygon points="10.5,723.5 16.5,723.5 19.5,729 16.5,734.5 10.5,734.5 7.5,729" fill="#e8e8e8" stroke="#000"/>
<path d="M5 729.5h6.5M11.5 725v9M11.5 728l4 -3M11.5 731l4.5 3.5M16.5 723.5l2 -1.5h5.5M24.5 722v15M15 736.5v-2" stroke="#000" fill="none"/>
<path d="M16.5 734.5l-3.2 -.8l2 -2z" fill="#000"/>
<rect x="23.5" y="725.5" width="2" height="7" fill="#d8d020" stroke="#605000" stroke-width="1"/>
<rect x="34" y="719" width="25" height="19" fill="#cccccc"/>
<rect x="34" y="719" width="25" height="1" fill="#ffffff"/>
<rect x="34" y="719" width="1" height="19" fill="#ffffff"/>
<rect x="34" y="737" width="25" height="1" fill="#000000"/>
<rect x="58" y="719" width="1" height="19" fill="#000000"/>
<rect x="35" y="736" width="23" height="1" fill="#8c8c8c"/>
<rect x="57" y="720" width="1" height="17" fill="#8c8c8c"/>
<text x="38.5" y="733" font-size="11.5" fill="#000000" textLength="16.5" lengthAdjust="spacingAndGlyphs">Exit</text>
<rect x="63" y="718" width="837" height="1" fill="#8c8c8c"/>
<rect x="63" y="718" width="1" height="21" fill="#8c8c8c"/>
<rect x="63" y="738" width="837" height="1" fill="#ffffff"/>
<rect x="899" y="718" width="1" height="21" fill="#ffffff"/>
<rect x="902" y="718" width="120" height="1" fill="#8c8c8c"/>
<rect x="902" y="718" width="1" height="21" fill="#8c8c8c"/>
<rect x="902" y="738" width="120" height="1" fill="#ffffff"/>
<rect x="1021" y="718" width="1" height="21" fill="#ffffff"/>
<text x="906" y="733" font-size="11.5" fill="#000000" textLength="69" lengthAdjust="spacingAndGlyphs" stroke="#000" stroke-width=".15">X: 406  Y: 567</text>
</g>
<g id="taskbar">
<rect x="0" y="740" width="1024" height="28" fill="#cccccc"/>
<rect x="0" y="741" width="1024" height="1" fill="#ffffff"/>
<rect x="2" y="744" width="54" height="22" fill="#cccccc"/>
<rect x="2" y="744" width="54" height="1" fill="#ffffff"/>
<rect x="2" y="744" width="1" height="22" fill="#ffffff"/>
<rect x="2" y="765" width="54" height="1" fill="#000000"/>
<rect x="55" y="744" width="1" height="22" fill="#000000"/>
<rect x="3" y="764" width="52" height="1" fill="#8c8c8c"/>
<rect x="54" y="745" width="1" height="20" fill="#8c8c8c"/>
<path d="M12.5 749.5c2 -1.5 4 -1.5 6 0l3 -1v12.5l-3 1c-2 -1.5 -4 -1.5 -6 0z" fill="#000"/>
<rect x="14" y="750" width="3" height="5" fill="#f02020"/>
<rect x="18" y="750" width="3" height="4" fill="#20b020"/>
<rect x="14" y="756" width="3" height="4" fill="#2030e0"/>
<rect x="18" y="755" width="3" height="5" fill="#f0e020"/>
<rect x="8" y="750" width="2" height="1" fill="#f02020"/>
<rect x="11" y="750" width="1" height="1" fill="#f02020"/>
<rect x="8" y="752" width="2" height="1" fill="#f02020"/>
<rect x="11" y="752" width="1" height="1" fill="#f02020"/>
<rect x="8" y="754" width="2" height="1" fill="#f02020"/>
<rect x="11" y="754" width="1" height="1" fill="#f02020"/>
<rect x="8" y="756" width="2" height="1" fill="#2030e0"/>
<rect x="11" y="756" width="1" height="1" fill="#2030e0"/>
<rect x="8" y="758" width="2" height="1" fill="#2030e0"/>
<rect x="11" y="758" width="1" height="1" fill="#2030e0"/>
<rect x="8" y="760" width="2" height="1" fill="#2030e0"/>
<rect x="11" y="760" width="1" height="1" fill="#2030e0"/>
<rect x="6" y="749" width="1" height="1" fill="#000000"/>
<rect x="10" y="749" width="1" height="1" fill="#000000"/>
<rect x="6" y="751" width="1" height="1" fill="#000000"/>
<rect x="10" y="751" width="1" height="1" fill="#000000"/>
<rect x="6" y="753" width="1" height="1" fill="#000000"/>
<rect x="10" y="753" width="1" height="1" fill="#000000"/>
<rect x="6" y="755" width="1" height="1" fill="#000000"/>
<rect x="10" y="755" width="1" height="1" fill="#000000"/>
<rect x="6" y="757" width="1" height="1" fill="#000000"/>
<rect x="10" y="757" width="1" height="1" fill="#000000"/>
<rect x="6" y="759" width="1" height="1" fill="#000000"/>
<rect x="10" y="759" width="1" height="1" fill="#000000"/>
<rect x="6" y="761" width="1" height="1" fill="#000000"/>
<rect x="10" y="761" width="1" height="1" fill="#000000"/>
<text x="24.5" y="758.5" font-size="11.5" fill="#000000" font-weight="bold" textLength="27" lengthAdjust="spacingAndGlyphs">Start</text>
<rect x="58" y="745" width="1" height="21" fill="#8c8c8c"/>
<rect x="59" y="745" width="1" height="21" fill="#ffffff"/>
<rect x="62" y="746" width="3" height="18" fill="#cccccc"/>
<rect x="62" y="746" width="3" height="1" fill="#ffffff"/>
<rect x="62" y="746" width="1" height="18" fill="#ffffff"/>
<rect x="62" y="763" width="3" height="1" fill="#8c8c8c"/>
<rect x="64" y="746" width="1" height="18" fill="#8c8c8c"/>
<rect x="72.5" y="748.5" width="15" height="14" fill="#408898" stroke="#203040" stroke-width="1"/>
<rect x="75.5" y="751.5" width="9" height="8" fill="#f4f4f4" stroke="#606060" stroke-width="1"/>
<path d="M78 758l7 -8.5" stroke="#e8d820" stroke-width="2.4"/><path d="M84.3 750.3l1.2 -1.5" stroke="#e02020" stroke-width="2.4"/><path d="M77.2 759l.8 -1.6l.9 .8z" fill="#000"/>
<ellipse cx="103.5" cy="755" rx="8.5" ry="4" fill="none" stroke="#60a0e8" stroke-width="1.3" transform="rotate(-28 103.5 755)"/>
<text x="97" y="761.5" font-size="18" fill="#1848c8" font-weight="bold" textLength="12.5" lengthAdjust="spacingAndGlyphs">e</text>
<rect x="118.5" y="749.5" width="15" height="9" fill="#ffffff" stroke="#303030" stroke-width="1"/>
<rect x="130" y="752" width="2" height="2" fill="#f01010"/>
<path d="M128 747.5c-4 -2 -7 0 -7 3M124 762.5c4 2 7 0 7 -3" fill="none" stroke="#2060d8" stroke-width="1.8"/>
<path d="M119 750l4.5 .5l-2.5 3zM133 760l-4.5 -.5l2.5 -3z" fill="#2060d8"/>
<rect x="144.5" y="747.5" width="10" height="4" fill="#f8f8f8" stroke="#000000" stroke-width="1"/>
<rect x="144.5" y="759.5" width="10" height="4" fill="#f8f8f8" stroke="#000000" stroke-width="1"/>
<rect x="141.5" y="750.5" width="15" height="9" fill="#000080" stroke="#000000" stroke-width="1"/>
<text x="142.5" y="758.5" font-size="7.5" fill="#20d020" font-weight="bold" textLength="13" lengthAdjust="spacingAndGlyphs">ICO</text>
<text x="166" y="755.5" font-size="12" fill="#000000" font-weight="bold" textLength="8" lengthAdjust="spacingAndGlyphs">»</text>
<rect x="177" y="745" width="1" height="21" fill="#8c8c8c"/>
<rect x="178" y="745" width="1" height="21" fill="#ffffff"/>
<rect x="181" y="746" width="3" height="18" fill="#cccccc"/>
<rect x="181" y="746" width="3" height="1" fill="#ffffff"/>
<rect x="181" y="746" width="1" height="18" fill="#ffffff"/>
<rect x="181" y="763" width="3" height="1" fill="#8c8c8c"/>
<rect x="183" y="746" width="1" height="18" fill="#8c8c8c"/>
<rect x="188" y="744" width="159" height="22" fill="url(#dith)"/>
<rect x="188" y="744" width="159" height="1" fill="#000000"/>
<rect x="188" y="744" width="1" height="22" fill="#000000"/>
<rect x="189" y="745" width="157" height="1" fill="#8c8c8c"/>
<rect x="189" y="745" width="1" height="20" fill="#8c8c8c"/>
<rect x="188" y="765" width="159" height="1" fill="#ffffff"/>
<rect x="346" y="744" width="1" height="22" fill="#ffffff"/>
<circle cx="197" cy="752" r="3.2" fill="#909090" stroke="#505050" stroke-dasharray="1.5 1"/>
<path d="M201.5 749.5h3a2.5 2.5 0 0 1 0 5h-3z" fill="#f0e820" stroke="#404040" stroke-width=".8"/>
<rect x="192.5" y="756.5" width="8" height="6" fill="#e8e8f0" stroke="#2030a0" stroke-width="1"/>
<rect x="200.5" y="756.5" width="7" height="6" fill="#a8a8a8" stroke="#2030a0" stroke-width="1"/>
<rect x="203" y="760" width="2" height="2" fill="#c02020"/>
<text x="212" y="759" font-size="11.5" fill="#000000" font-weight="bold" textLength="27" lengthAdjust="spacingAndGlyphs">TINA</text>
<rect x="351" y="744" width="160" height="22" fill="#cccccc"/>
<rect x="351" y="744" width="160" height="1" fill="#ffffff"/>
<rect x="351" y="744" width="1" height="22" fill="#ffffff"/>
<rect x="351" y="765" width="160" height="1" fill="#000000"/>
<rect x="510" y="744" width="1" height="22" fill="#000000"/>
<rect x="352" y="764" width="158" height="1" fill="#8c8c8c"/>
<rect x="509" y="745" width="1" height="20" fill="#8c8c8c"/>
<circle cx="361" cy="753.5" r="5" fill="#a8a8a8" stroke="#707070" stroke-dasharray="2 1.2"/>
<path d="M364 759l5 -11" stroke="#2040d0" stroke-width="2"/>
<rect x="363" y="760" width="2" height="2" fill="#d0b000"/>
<text x="372.5" y="759" font-size="11.5" fill="#000000" textLength="97" lengthAdjust="spacingAndGlyphs">Jasc Paint Shop Pro</text>
<rect x="803" y="745" width="1" height="21" fill="#8c8c8c"/>
<rect x="804" y="745" width="1" height="21" fill="#ffffff"/>
<rect x="806" y="744" width="216" height="1" fill="#8c8c8c"/>
<rect x="806" y="744" width="1" height="22" fill="#8c8c8c"/>
<rect x="806" y="765" width="216" height="1" fill="#ffffff"/>
<rect x="1021" y="744" width="1" height="22" fill="#ffffff"/>
<rect x="811.5" y="748.5" width="12" height="11" fill="#f8f8f8" stroke="#202020" stroke-width="1"/>
<rect x="811.5" y="748.5" width="12" height="2" fill="#d0d0d0" stroke="#202020" stroke-width="1"/>
<text x="811.5" y="752.5" font-size="6" fill="#2030e0" font-weight="bold" textLength="7" lengthAdjust="spacingAndGlyphs">88</text>
<circle cx="822" cy="758" r="3.4" fill="#fff" stroke="#d01010" stroke-width="1.6"/><path d="M822 756v2.3h1.5" stroke="#000" fill="none" stroke-width=".9"/>
<rect x="827" y="747" width="16" height="16" fill="#000090"/>
<text x="828.5" y="759.5" font-size="11.5" fill="#ffffff" textLength="13" lengthAdjust="spacingAndGlyphs">Hu</text>
<path d="M844.5 753v4h2.5l5 5.5v-15l-5 5.5z" fill="#f0e030" stroke="#202000" stroke-width=".9"/>
<path d="M855 752l3 -2M855 755h3.5M855 758l3 2" stroke="#a8a8a8" fill="none"/>
<rect x="865" y="752" width="12" height="11" fill="#101010"/>
<rect x="867" y="752" width="8" height="5" fill="#f0e030"/>
<rect x="867" y="759" width="8" height="4" fill="#8890a0"/>
<rect x="861.5" y="748.5" width="8" height="3" fill="#b0b0b0" stroke="#303030" stroke-width="1"/>
<circle cx="872.5" cy="750" r="2.5" fill="#3090b0" stroke="#303030"/>
<rect x="878" y="747" width="16" height="16" fill="#000090"/>
<circle cx="886" cy="755" r="1.7" fill="#f8e820"/><path d="M883 751.5a5 5 0 0 0 0 7M889 751.5a5 5 0 0 1 0 7M880.8 749.5a8 8 0 0 0 0 11M891.2 749.5a8 8 0 0 1 0 11" stroke="#f8e820" fill="none" stroke-width="1.2"/>
<path d="M896 758.5l6 -1.5l8 2.5l-5.5 3z" fill="#d8d8d8" stroke="#202020" stroke-width=".9"/>
<path d="M899 758l8 -9.5" stroke="#1030c0" stroke-width="2.4"/><path d="M901.5 759l8 -9.5" stroke="#20a030" stroke-width="2"/><path d="M904 760l7 -8.5" stroke="#d02020" stroke-width="2"/><path d="M906 749.5l4 -2" stroke="#e8d020" stroke-width="1.5"/>
<rect x="912" y="747" width="16" height="16" fill="#f00000"/>
<rect x="912" y="747" width="4" height="16" fill="#ffffff"/>
<path d="M912.5 757c0 -5 4 -9 10 -9.5l-3 3c-3 1 -5 3.5 -5.5 7.5z" fill="#f00000" stroke="#fff" stroke-width=".8"/>
<path d="M918.5 751.5v9.5M918.5 756l5.5 -6.5M919.5 755l5 6c1 1 2 .5 2 -.8" stroke="#fff" fill="none" stroke-width="1.4"/>
<circle cx="935.5" cy="753.5" r="5" fill="none" stroke="#209030" stroke-width="2.6"/><path d="M933 753l2 2.5l4 -4.5" stroke="#e8e8e8" fill="none" stroke-width="1.6"/>
<circle cx="941" cy="758.5" r="4" fill="#f8e820" stroke="#a08000" stroke-width=".6"/><path d="M939 759.5c1 1.5 3 1.5 4 0" stroke="#c03000" fill="none" stroke-width=".9"/><rect x="939.3" y="756.5" width="1" height="1.3" fill="#402000"/><rect x="941.8" y="756.5" width="1" height="1.3" fill="#402000"/>
<rect x="947.5" y="748.5" width="7" height="5" fill="#209020" stroke="#101010" stroke-width="1"/>
<rect x="953.5" y="752.5" width="7" height="6" fill="#209020" stroke="#101010" stroke-width="1"/>
<rect x="946.5" y="755.5" width="7" height="1" fill="#e0e0e0" stroke="#101010" stroke-width="1"/>
<rect x="951.5" y="760.5" width="10" height="2" fill="#e0e0e0" stroke="#101010" stroke-width="1"/>
<rect x="956" y="749" width="5" height="1" fill="#2030c0"/>
<rect x="963" y="747" width="16" height="16" fill="#ffffff"/>
<path d="M966 749.5l5.5 6l-4.5 6.5M977 748l-5.5 7.5l4.5 5.5" stroke="#101090" fill="none" stroke-width="2.2"/><circle cx="971.5" cy="750" r="1.6" fill="#101090"/>
<rect x="972" y="761" width="7" height="2" fill="#f8e820"/>
<text x="988" y="759.5" font-size="11.5" fill="#000000" textLength="26" lengthAdjust="spacingAndGlyphs">21:25</text>
</g>
<g id="toolbar-icons">
<polygon points="14.5,52.5 19.5,52.5 21.5,54.5 27.5,54.5 27.5,57.5 14.5,57.5" fill="#ffff80" stroke="#000000"/>
<polygon points="14.5,62.5 14.5,54.5" fill="none" stroke="#000000"/>
<polygon points="15.5,62.5 18.5,56.5 30.5,56.5 27.5,62.5" fill="#e8e860" stroke="#000000"/>
<rect x="39.5" y="50.5" width="13" height="13" fill="#0000e0" stroke="#000000" stroke-width="1"/>
<rect x="42" y="51" width="9" height="6" fill="#ffffff"/>
<rect x="43" y="59" width="7" height="4" fill="#c0c0c0"/>
<rect x="44" y="60" width="2" height="3" fill="#0000e0"/>
<polygon points="66.5,50.5 72.5,50.5 75.5,53.5 75.5,61.5 66.5,61.5" fill="#cccccc" stroke="#909090"/>
<polygon points="72.5,54.5 78.5,54.5 81.5,57.5 81.5,65.5 72.5,65.5" fill="#cccccc" stroke="#909090"/>
<rect x="74" y="59" width="6" height="1" fill="#909090"/>
<rect x="74" y="61" width="6" height="1" fill="#909090"/>
<rect x="74" y="63" width="6" height="1" fill="#909090"/>
<rect x="73" y="66" width="10" height="1" fill="#ffffff"/>
<rect x="82" y="58" width="1" height="9" fill="#ffffff"/>
<rect x="90.5" y="51.5" width="11" height="13" fill="#cccccc" stroke="#909090" stroke-width="1"/>
<rect x="93" y="49" width="6" height="3" fill="#a8a8a8"/>
<polygon points="97.5,56.5 103.5,56.5 106.5,59.5 106.5,66.5 97.5,66.5" fill="#cccccc" stroke="#909090"/>
<rect x="99" y="60" width="6" height="1" fill="#909090"/>
<rect x="99" y="62" width="6" height="1" fill="#909090"/>
<rect x="99" y="64" width="6" height="1" fill="#909090"/>
<polyline points="93.5,54.5 98.5,59.5" fill="none" stroke="#909090" stroke-width="1.5"/>
<rect x="98" y="67" width="10" height="1" fill="#ffffff"/>
<rect x="107" y="60" width="1" height="8" fill="#ffffff"/>
<polygon points="128.5,53 128.5,62.5 130.8,60.5 132.5,64 134,63.3 132.3,60 135,59.8" fill="#000000"/>
<rect x="147" y="56" width="6" height="1" fill="#000000"/>
<rect x="152" y="52" width="1" height="9" fill="#000000"/>
<rect x="152" y="52" width="4" height="1" fill="#000000"/>
<rect x="152" y="60" width="4" height="1" fill="#000000"/>
<rect x="154" y="58" width="3" height="3" fill="#000000"/>
<path d="M174.3 62l4.8 -10l3 1.4l-4.8 10z" fill="#fff" stroke="#000" stroke-width="1.7"/>
<polygon points="173.5,64.5 174.2,61.5 176.7,62.7" fill="#000000"/>
<rect x="193" y="53" width="3" height="1" fill="#000000"/>
<rect x="197" y="53" width="3" height="1" fill="#000000"/>
<rect x="196" y="50" width="1" height="3" fill="#000000"/>
<rect x="196" y="54" width="1" height="3" fill="#000000"/>
<text x="200.5" y="63" font-size="12.5" fill="#000000" font-weight="bold" textLength="7" lengthAdjust="spacingAndGlyphs" style="font-family:'Liberation Serif', serif">I</text>
<rect x="217" y="53" width="3" height="1" fill="#000000"/>
<rect x="221" y="53" width="3" height="1" fill="#000000"/>
<rect x="220" y="50" width="1" height="3" fill="#000000"/>
<rect x="220" y="54" width="1" height="3" fill="#000000"/>
<text x="224" y="63" font-size="12.5" fill="#000000" font-weight="bold" textLength="7.5" lengthAdjust="spacingAndGlyphs" style="font-family:'Liberation Serif', serif">0</text>
<text x="242.5" y="62.5" font-size="16" fill="#000000" font-weight="bold" textLength="14" lengthAdjust="spacingAndGlyphs" style="font-family:'Liberation Serif', serif">T</text>
<polyline points="266.5,63 281.5,51.5" fill="none" stroke="#000000" stroke-width="1.3"/>
<rect x="268" y="51" width="1" height="5" fill="#000000"/>
<rect x="270" y="53" width="4" height="1" fill="#000000"/>
<polygon points="278.5,57.5 281,60 278.5,62.5 276,60" fill="#000000"/>
<rect x="274" y="60" width="9" height="1" fill="#000000"/>
<path d="M300.5 60.5c-2 -8 8 -9 9 -2" fill="none" stroke="#a0a0a0" stroke-width="1.6"/>
<polygon points="298,57 303.5,58.5 299.5,62.5" fill="#a0a0a0"/>
<path d="M301.5 61.5c-2 -8 8 -9 9 -2" fill="none" stroke="#ffffff" stroke-width="1" opacity=".8"/>
<path d="M331.5 60.5c2 -8 -8 -9 -9 -2" fill="none" stroke="#a0a0a0" stroke-width="1.6"/>
<polygon points="334,57 328.5,58.5 332.5,62.5" fill="#a0a0a0"/>
<path d="M332.5 61.5c2 -8 -8 -9 -9 -2" fill="none" stroke="#ffffff" stroke-width="1" opacity=".8"/>
<rect x="346" y="57" width="13" height="1" fill="#a0a0a0"/>
<rect x="352" y="51" width="1" height="13" fill="#a0a0a0"/>
<rect x="347" y="58" width="13" height="1" fill="#ffffff"/>
<rect x="353" y="52" width="1" height="13" fill="#ffffff"/>
<rect x="351" y="56" width="3" height="3" fill="#a0a0a0"/>
<rect x="379" y="53" width="1.4" height="1.4" fill="#000000"/>
<rect x="379" y="57" width="1.4" height="1.4" fill="#000000"/>
<rect x="379" y="61" width="1.4" height="1.4" fill="#000000"/>
<rect x="383" y="53" width="1.4" height="1.4" fill="#000000"/>
<rect x="383" y="57" width="1.4" height="1.4" fill="#000000"/>
<rect x="383" y="61" width="1.4" height="1.4" fill="#000000"/>
<rect x="387" y="53" width="1.4" height="1.4" fill="#000000"/>
<rect x="387" y="57" width="1.4" height="1.4" fill="#000000"/>
<rect x="387" y="61" width="1.4" height="1.4" fill="#000000"/>
<rect x="391" y="53" width="1.4" height="1.4" fill="#000000"/>
<rect x="391" y="57" width="1.4" height="1.4" fill="#000000"/>
<rect x="391" y="61" width="1.4" height="1.4" fill="#000000"/>
<circle cx="413.5" cy="54.5" r="4.8" fill="#f4f4f4" stroke="#000" stroke-width="1.5"/>
<rect x="411" y="54" width="5" height="1" fill="#ff0000"/>
<rect x="413" y="52" width="1" height="5" fill="#ff0000"/>
<polyline points="417.5,59 419,60.5" fill="none" stroke="#e0e000" stroke-width="2"/>
<polyline points="419,60.5 423.5,65" fill="none" stroke="#000000" stroke-width="2.2"/>
<polygon points="505,47.5 510,47.5 513,50.5 513,55 510,58 505,58 502,55 502,50.5" fill="#990000" stroke="#800000" stroke-width=".6"/>
<text x="509.5" y="65.5" font-size="8.5" fill="#000000" font-weight="bold" textLength="11" lengthAdjust="spacingAndGlyphs">DC</text>
<polyline points="545.5,63.5 557.5,50.5" fill="none" stroke="#000000" stroke-width="1"/>
<polyline points="551,48 551,66.5" fill="none" stroke="#000000" stroke-width="1" shape-rendering="crispEdges"/>
<polygon points="558.5,48.5 554.5,49.5 557.5,52.5" fill="#000000"/>
<circle cx="551" cy="57" r="5.2" fill="#ffff40" stroke="#000"/>
<text x="548" y="60.5" font-size="8" fill="#000000" font-weight="bold" textLength="6" lengthAdjust="spacingAndGlyphs">V</text>
<polyline points="564,66.5 559,61.5" fill="none" stroke="#c00000" stroke-width="1.4"/>
<polygon points="557,59.5 562,60.5 558,64.5" fill="#c00000"/>
<rect x="573" y="47" width="1" height="20" fill="#000000"/>
<rect x="571.5" y="52.5" width="4" height="11" fill="#ffff40" stroke="#000000" stroke-width="1"/>
<text x="577" y="55.5" font-size="10" fill="#000000" textLength="11.5" lengthAdjust="spacingAndGlyphs" stroke="#000" stroke-width=".2">1K</text>
<polyline points="588.5,65 583.5,60" fill="none" stroke="#c00000" stroke-width="1.4"/>
<polygon points="581,57.5 586.5,58.5 582,63" fill="#c00000"/>
</g>
<g id="palette-icons">
<polygon points="30.5,83.5 30.5,97.5 44.5,90.5" fill="#ffff00" stroke="#000000"/>
<rect x="26" y="87" width="4" height="1" fill="#000000"/>
<rect x="26" y="93" width="4" height="1" fill="#000000"/>
<rect x="44" y="90" width="5" height="1" fill="#000000"/>
<rect x="32" y="87" width="3" height="1" fill="#000000"/>
<rect x="32" y="93" width="3" height="1" fill="#000000"/>
<rect x="33" y="92" width="1" height="3" fill="#000000"/>
<polygon points="63.5,83.5 63.5,97.5 77.5,90.5" fill="#ffff00" stroke="#000000"/>
<rect x="59" y="87" width="4" height="1" fill="#000000"/>
<rect x="59" y="93" width="4" height="1" fill="#000000"/>
<rect x="77" y="90" width="5" height="1" fill="#000000"/>
<rect x="65" y="87" width="3" height="1" fill="#000000"/>
<rect x="65" y="93" width="3" height="1" fill="#000000"/>
<rect x="66" y="92" width="1" height="3" fill="#000000"/>
<rect x="72" y="82" width="1" height="16" fill="#000000"/>
<rect x="74" y="95" width="3" height="1" fill="#000000"/>
<rect x="75" y="94" width="1" height="3" fill="#000000"/>
<rect x="95" y="90" width="16" height="1" fill="#000000"/>
<polygon points="98,86 98,95 107,90.5" fill="#000000"/>
<rect x="107" y="86" width="1" height="9" fill="#000000"/>
<rect x="128" y="90" width="16" height="1" fill="#000000"/>
<polygon points="131,86 131,95 139,90.5" fill="#000000"/>
<rect x="140" y="86" width="1" height="9" fill="#000000"/>
<rect x="140" y="86" width="4" height="1" fill="#000000"/>
<rect x="143" y="86" width="1" height="3" fill="#000000"/>
<rect x="137" y="94" width="4" height="1" fill="#000000"/>
<rect x="137" y="92" width="1" height="3" fill="#000000"/>
<rect x="161" y="91" width="17" height="1" fill="#000000"/>
<polygon points="165,87 165,96 174,91.5" fill="#000000"/>
<rect x="174" y="87" width="1" height="9" fill="#000000"/>
<polyline points="172.5,96.5 168.5,100.5" fill="none" stroke="#000000" stroke-width="1"/>
<polyline points="176.5,97.5 172.5,101.5" fill="none" stroke="#000000" stroke-width="1"/>
<polygon points="167,101.5 168,98.5 170.5,101" fill="#000000"/>
<polygon points="171,102.5 172,99.5 174.5,102" fill="#000000"/>
<rect x="194" y="90" width="18" height="1" fill="#000000"/>
<polygon points="197,86 197,95 206,90.5" fill="#000000"/>
<rect x="206" y="86" width="1" height="9" fill="#000000"/>
<rect x="209" y="86" width="1" height="9" fill="#000000"/>
<rect x="227" y="90" width="17" height="1" fill="#000000"/>
<polygon points="231,86 231,95 239,90.5" fill="#000000"/>
<rect x="240" y="86" width="1" height="9" fill="#000000"/>
<rect x="240" y="86" width="4" height="1" fill="#000000"/>
<rect x="243" y="86" width="1" height="2" fill="#000000"/>
<rect x="237" y="94" width="4" height="1" fill="#000000"/>
<rect x="237" y="93" width="1" height="2" fill="#000000"/>
<rect x="259" y="90" width="7" height="1" fill="#000000"/>
<rect x="266" y="82" width="2" height="16" fill="#000000"/>
<polyline points="267.5,87.5 273.5,81.5 273.5,79.5" fill="none" stroke="#000000" stroke-width="1.3"/>
<polyline points="267.5,93.5 273.5,99.5 273.5,101.5" fill="none" stroke="#000000" stroke-width="1.3"/>
<polygon points="274,100.5 270,99.5 273,96.5" fill="#000000"/>
<rect x="292" y="90" width="7" height="1" fill="#000000"/>
<rect x="299" y="82" width="2" height="16" fill="#000000"/>
<polyline points="300.5,87.5 306.5,81.5 306.5,79.5" fill="none" stroke="#000000" stroke-width="1.3"/>
<polyline points="300.5,93.5 306.5,99.5 306.5,101.5" fill="none" stroke="#000000" stroke-width="1.3"/>
<polygon points="302,94.5 306,95.5 303,98.5" fill="#000000"/>
<rect x="323" y="95" width="8" height="1" fill="#000000"/>
<rect x="330" y="84" width="1" height="12" fill="#000000"/>
<rect x="333" y="83" width="1" height="14" fill="#000000"/>
<rect x="333" y="84" width="6" height="1" fill="#000000"/>
<rect x="333" y="96" width="6" height="1" fill="#000000"/>
<rect x="334" y="90" width="5" height="1" fill="#000000"/>
<polygon points="334,90.5 337,88.5 337,92.5" fill="#000000"/>
<rect x="339" y="78" width="1" height="7" fill="#000000"/>
<rect x="339" y="90" width="1" height="12" fill="#000000"/>
<rect x="356" y="85" width="8" height="1" fill="#000000"/>
<rect x="363" y="85" width="1" height="10" fill="#000000"/>
<rect x="366" y="83" width="1" height="14" fill="#000000"/>
<rect x="366" y="84" width="6" height="1" fill="#000000"/>
<rect x="366" y="96" width="6" height="1" fill="#000000"/>
<rect x="367" y="90" width="5" height="1" fill="#000000"/>
<polygon points="371.5,90.5 368.5,88.5 368.5,92.5" fill="#000000"/>
<rect x="372" y="78" width="1" height="7" fill="#000000"/>
<rect x="372" y="90" width="1" height="12" fill="#000000"/>
<rect x="389" y="95" width="8" height="1" fill="#000000"/>
<rect x="396" y="84" width="1" height="12" fill="#000000"/>
<rect x="399" y="83" width="1" height="14" fill="#000000"/>
<rect x="399" y="84" width="6" height="1" fill="#000000"/>
<rect x="399" y="96" width="6" height="1" fill="#000000"/>
<rect x="400" y="90" width="5" height="1" fill="#000000"/>
<polygon points="400,90.5 403,88.5 403,92.5" fill="#000000"/>
<rect x="405" y="78" width="1" height="7" fill="#000000"/>
<rect x="405" y="90" width="1" height="12" fill="#000000"/>
<rect x="422" y="85" width="8" height="1" fill="#000000"/>
<rect x="429" y="85" width="1" height="10" fill="#000000"/>
<rect x="432" y="83" width="1" height="14" fill="#000000"/>
<rect x="432" y="84" width="6" height="1" fill="#000000"/>
<rect x="432" y="96" width="6" height="1" fill="#000000"/>
<rect x="433" y="90" width="5" height="1" fill="#000000"/>
<polygon points="437.5,90.5 434.5,88.5 434.5,92.5" fill="#000000"/>
<rect x="438" y="78" width="1" height="7" fill="#000000"/>
<rect x="438" y="90" width="1" height="12" fill="#000000"/>
<rect x="455" y="95" width="7" height="1" fill="#000000"/>
<polygon points="462,95.5 458.5,93 458.5,98" fill="#000000"/>
<rect x="462" y="85" width="1" height="12" fill="#000000"/>
<rect x="466" y="84" width="1" height="13" fill="#000000"/>
<rect x="466" y="84" width="6" height="1" fill="#000000"/>
<rect x="466" y="96" width="6" height="1" fill="#000000"/>
<rect x="471" y="79" width="1" height="6" fill="#000000"/>
<rect x="471" y="96" width="1" height="6" fill="#000000"/>
<rect x="489" y="85" width="7" height="1" fill="#000000"/>
<polygon points="488,85.5 491.5,83 491.5,88" fill="#000000"/>
<rect x="495" y="84" width="1" height="12" fill="#000000"/>
<rect x="499" y="84" width="1" height="13" fill="#000000"/>
<rect x="499" y="85" width="6" height="1" fill="#000000"/>
<rect x="499" y="96" width="6" height="1" fill="#000000"/>
<rect x="504" y="79" width="1" height="7" fill="#000000"/>
<rect x="504" y="96" width="1" height="6" fill="#000000"/>
<rect x="524" y="90" width="17" height="1" fill="#000000"/>
<polygon points="527,86 527,95 537,90.5" fill="#000000"/>
<rect x="537" y="86" width="1" height="9" fill="#000000"/>
<polyline points="537.5,91.5 541,95.5 541,98.5" fill="none" stroke="#000000" stroke-width="1.2"/>
<rect x="555" y="90" width="21" height="1" fill="#000000"/>
<rect x="560" y="80" width="1" height="21" fill="#000000"/>
<rect x="569" y="80" width="1" height="21" fill="#000000"/>
<rect x="561" y="80" width="1" height="21" fill="#000000"/>
<polygon points="561,80.5 561,90.5 570,85.5" fill="#000000"/>
<polygon points="570,90.5 570,100.5 561,95.5" fill="#000000"/>
<rect x="588" y="90" width="21" height="1" fill="#000000"/>
<rect x="593" y="80" width="1" height="21" fill="#000000"/>
<rect x="602" y="80" width="1" height="21" fill="#000000"/>
<rect x="594" y="80" width="1" height="21" fill="#000000"/>
<polygon points="594,80.5 594,90.5 603,85.5" fill="#000000"/>
<polygon points="603,90.5 603,100.5 594,95.5" fill="#000000"/>
<polyline points="602.5,95.5 608.5,101.5" fill="none" stroke="#000000" stroke-width="1.3"/>
<polygon points="631.5,76.5 645.5,90.5 631.5,104.5 617.5,90.5" fill="none" stroke="#000"/>
<polygon points="627,81 625.2,89.2 618.8,82.8" fill="#000000"/>
<line x1="630.8" y1="84.2" x2="623.8" y2="77.2" stroke="#000"/>
<polygon points="641,86 632.8,84.2 639.2,77.8" fill="#000000"/>
<line x1="637.8" y1="89.8" x2="644.8" y2="82.8" stroke="#000"/>
<polygon points="627,100 618.8,98.2 625.2,91.8" fill="#000000"/>
<line x1="623.8" y1="103.8" x2="630.8" y2="96.8" stroke="#000"/>
<polygon points="641,95 639.2,103.2 632.8,96.8" fill="#000000"/>
<line x1="644.8" y1="98.2" x2="637.8" y2="91.2" stroke="#000"/>
<rect x="654.5" y="80.5" width="20" height="21" fill="none" stroke="#000000" stroke-width="1"/>
<rect x="652" y="86" width="26" height="1" fill="#000000"/>
<polygon points="659,82 659,91 669,86.5" fill="#000000"/>
<rect x="669" y="82" width="1" height="9" fill="#000000"/>
<rect x="665" y="92" width="1" height="2" fill="#000000"/>
<rect x="665" y="95" width="1" height="2" fill="#000000"/>
<rect x="665" y="98" width="1" height="2" fill="#000000"/>
<rect x="668" y="103" width="1.5" height="1.5" fill="#000000"/>
<rect x="671" y="103" width="1.5" height="1.5" fill="#000000"/>
<rect x="674" y="103" width="1.5" height="1.5" fill="#000000"/>
</g>
</svg>
</body>
</html>
